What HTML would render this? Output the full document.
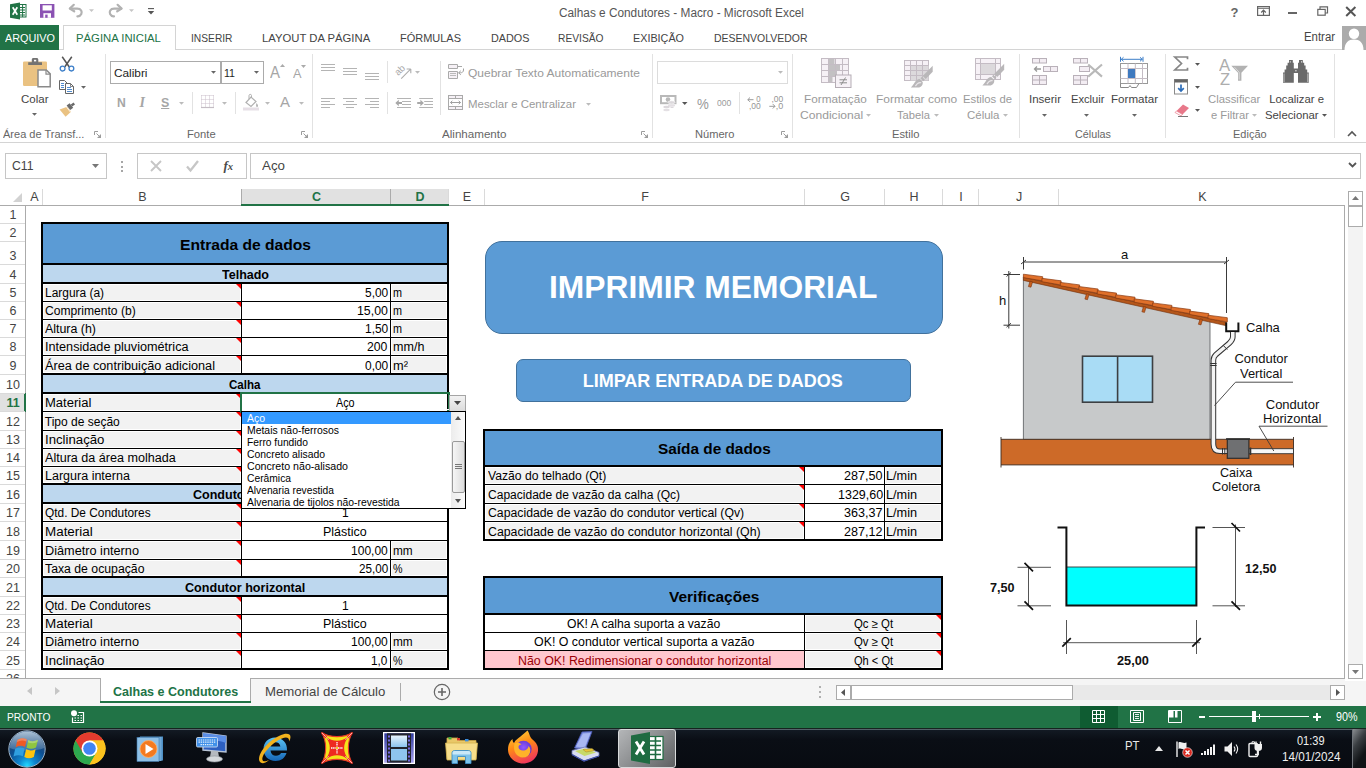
<!DOCTYPE html>
<html lang="pt-BR"><head><meta charset="utf-8"><title>Calhas e Condutores - Macro - Microsoft Excel</title>
<style>
html,body{margin:0;padding:0}
body{width:1366px;height:768px;overflow:hidden;position:relative;background:#fff;font-family:"Liberation Sans",sans-serif;font-size:12px;color:#444}
.a{position:absolute;box-sizing:border-box}
.t{position:absolute;white-space:pre;display:block;transform-origin:0 50%}
svg{display:block;overflow:visible}
</style></head><body>
<!-- title bar -->
<svg class="a" style="left:10px;top:2px" width="17" height="18" viewBox="0 0 17 18">
<rect x="8" y="2.5" width="8" height="12.5" fill="#fff" stroke="#217346" stroke-width="1"/>
<path d="M10 5.5h5M10 8h5M10 10.5h5M10 13h5M12.6 3v12" stroke="#217346" stroke-width="1" fill="none"/>
<path d="M0 2.2 L10 0.5 V17.5 L0 15.8Z" fill="#217346"/>
<path d="M2.7 5.3 L7.3 12.7 M7.3 5.3 L2.7 12.7" stroke="#fff" stroke-width="1.7" fill="none"/>
</svg>
<svg class="a" style="left:40px;top:4px" width="15" height="14" viewBox="0 0 15 14">
<path d="M0 0H14.4V13.8H0Z" fill="#8b52b3"/>
<rect x="2.6" y="1.3" width="9.2" height="5.2" fill="#fff"/>
<rect x="3.4" y="9.2" width="7.6" height="4.6" fill="#fff"/>
<rect x="5.2" y="10.6" width="2.4" height="3.2" fill="#8b52b3"/>
</svg>
<svg class="a" style="left:68px;top:3px" width="70" height="16" viewBox="0 0 70 16">
<g fill="none" stroke="#b2b2b2" stroke-width="2.2" stroke-linecap="round" stroke-linejoin="round">
<path d="M5.8 1.8 L1.8 5.6 L6.2 8.3"/><path d="M2.2 5.6 H9.2 C13.3 5.6 14.3 9 13.3 11 C12.4 12.8 10.5 13.4 9.4 13.3"/>
<path d="M49.6 1.8 L53.6 5.6 L49.2 8.3"/><path d="M53.2 5.6 H46.2 C42.1 5.6 41.1 9 42.1 11 C43 12.8 44.9 13.4 46 13.3"/>
</g>
<path d="M21 6.2h5l-2.5 2.8z M61 6.2h5l-2.5 2.8z" fill="#c6c6c6"/>
</svg>
<svg class="a" style="left:147px;top:7px" width="8" height="9" viewBox="0 0 8 9"><path d="M1 1.6h6" stroke="#555" stroke-width="1.1"/><path d="M0.8 4h6.4L4 7.4z" fill="#555"/></svg>
<span class="t" style="left:559.00px;top:5px;line-height:16px;font-size:12px;color:#555;transform:scaleX(0.9849);">Calhas e Condutores - Macro - Microsoft Excel</span>
<span class="t" style="left:1230.53px;top:3.5px;line-height:18px;font-size:13px;color:#666;font-weight:bold;">?</span>
<svg class="a" style="left:1257px;top:6px" width="14" height="11" viewBox="0 0 14 11"><rect x="0.600" y="0.600" width="11.800" height="8.800" fill="none" stroke="#666" stroke-width="1.200"/><path d="M0.600 2.300h11.800" stroke="#666"/><path d="M6.500 9V4.400M4.200 6.500L6.500 4.200L8.800 6.500" stroke="#666" stroke-width="1.200" fill="none"/></svg>
<div class="a" style="left:1288px;top:12px;width:9px;height:2px;background:#666"></div>
<svg class="a" style="left:1316.500px;top:6px" width="12" height="12" viewBox="0 0 12 12"><path d="M3 3V0.8H10.5V7H8.2" fill="none" stroke="#666" stroke-width="1.2"/><rect x="0.8" y="3.4" width="7.4" height="5.8" fill="none" stroke="#666" stroke-width="1.2"/></svg>
<svg class="a" style="left:1345px;top:6px" width="12" height="11" viewBox="0 0 12 11"><path d="M1.2 1L10.4 10M10.4 1L1.2 10" stroke="#555" stroke-width="2"/></svg>
<!-- tabs -->
<div class="a" style="left:0px;top:49px;width:1366px;height:1px;background:#d4d4d4"></div>
<div class="a" style="left:0px;top:25px;width:59px;height:25px;background:#217346"></div>
<span class="t" style="left:4.50px;top:29.7px;line-height:16px;font-size:11.5px;color:#fff;transform:scaleX(0.9428);">ARQUIVO</span>
<div class="a" style="left:63px;top:25px;width:113px;height:25px;background:#fff;border:1px solid #d4d4d4;border-bottom:none"></div>
<span class="t" style="left:76.00px;top:29.7px;line-height:16px;font-size:11.5px;color:#217346;transform:scaleX(0.9837);">PÁGINA INICIAL</span>
<span class="t" style="left:190.50px;top:29.7px;line-height:16px;font-size:11.5px;color:#444;transform:scaleX(0.8897);">INSERIR</span>
<span class="t" style="left:261.50px;top:29.7px;line-height:16px;font-size:11.5px;color:#444;transform:scaleX(0.9822);">LAYOUT DA PÁGINA</span>
<span class="t" style="left:400.00px;top:29.7px;line-height:16px;font-size:11.5px;color:#444;transform:scaleX(0.9547);">FÓRMULAS</span>
<span class="t" style="left:490.50px;top:29.7px;line-height:16px;font-size:11.5px;color:#444;transform:scaleX(0.9414);">DADOS</span>
<span class="t" style="left:558.00px;top:29.7px;line-height:16px;font-size:11.5px;color:#444;transform:scaleX(0.8899);">REVISÃO</span>
<span class="t" style="left:633.00px;top:29.7px;line-height:16px;font-size:11.5px;color:#444;transform:scaleX(0.9388);">EXIBIÇÃO</span>
<span class="t" style="left:713.50px;top:29.7px;line-height:16px;font-size:11.5px;color:#444;transform:scaleX(0.9106);">DESENVOLVEDOR</span>
<span class="t" style="left:1304.00px;top:29px;line-height:16px;font-size:12px;color:#444;transform:scaleX(0.9487);">Entrar</span>
<svg class="a" style="left:1342px;top:26px" width="25" height="24" viewBox="0 0 25 24"><rect width="25" height="24" fill="#ababab"/><circle cx="12" cy="7.800" r="5.200" fill="#fff"/><path d="M2.500 24c0-7.500 4-10.500 9.500-10.500s9.500 3 9.500 10.500z" fill="#fff"/></svg>
<!-- ribbon -->
<div class="a" style="left:0px;top:142px;width:1366px;height:1px;background:#d4d4d4"></div>
<div class="a" style="left:105px;top:54px;width:1px;height:84px;background:#e2e2e2"></div>
<div class="a" style="left:312px;top:54px;width:1px;height:84px;background:#e2e2e2"></div>
<div class="a" style="left:652px;top:54px;width:1px;height:84px;background:#e2e2e2"></div>
<div class="a" style="left:792px;top:54px;width:1px;height:84px;background:#e2e2e2"></div>
<div class="a" style="left:1019px;top:54px;width:1px;height:84px;background:#e2e2e2"></div>
<div class="a" style="left:1165px;top:54px;width:1px;height:84px;background:#e2e2e2"></div>
<div class="a" style="left:1334px;top:54px;width:1px;height:84px;background:#e2e2e2"></div>
<div class="a" style="left:192px;top:92px;width:1px;height:22px;background:#e2e2e2"></div>
<div class="a" style="left:235px;top:92px;width:1px;height:22px;background:#e2e2e2"></div>
<div class="a" style="left:387px;top:61px;width:1px;height:22px;background:#e2e2e2"></div>
<div class="a" style="left:387px;top:92px;width:1px;height:22px;background:#e2e2e2"></div>
<div class="a" style="left:440px;top:61px;width:1px;height:54px;background:#e2e2e2"></div>
<div class="a" style="left:739px;top:92px;width:1px;height:22px;background:#e2e2e2"></div>
<span class="t" style="left:3.00px;top:126.3px;line-height:16px;font-size:11.3px;color:#666;transform:scaleX(0.9747);">Área de Transf...</span>
<span class="t" style="left:186.70px;top:126.3px;line-height:16px;font-size:11.3px;color:#666;transform:scaleX(0.9900);">Fonte</span>
<span class="t" style="left:441.50px;top:126.3px;line-height:16px;font-size:11.3px;color:#666;transform:scaleX(1.0271);">Alinhamento</span>
<span class="t" style="left:694.60px;top:126.3px;line-height:16px;font-size:11.3px;color:#666;transform:scaleX(0.9806);">Número</span>
<span class="t" style="left:892.00px;top:126.3px;line-height:16px;font-size:11.3px;color:#666;transform:scaleX(0.9919);">Estilo</span>
<span class="t" style="left:1074.50px;top:126.3px;line-height:16px;font-size:11.3px;color:#666;transform:scaleX(0.9529);">Células</span>
<span class="t" style="left:1233.00px;top:126.3px;line-height:16px;font-size:11.3px;color:#666;transform:scaleX(0.9727);">Edição</span>
<svg class="a" style="left:94px;top:131px" width="7" height="7" viewBox="0 0 7 7"><path d="M0.500 4V0.500H4" fill="none" stroke="#9c9c9c"/><path d="M2.500 2.500L6 6" fill="none" stroke="#9c9c9c"/><path d="M7 3V7H3Z" fill="#9c9c9c"/></svg>
<svg class="a" style="left:301px;top:131px" width="7" height="7" viewBox="0 0 7 7"><path d="M0.500 4V0.500H4" fill="none" stroke="#9c9c9c"/><path d="M2.500 2.500L6 6" fill="none" stroke="#9c9c9c"/><path d="M7 3V7H3Z" fill="#9c9c9c"/></svg>
<svg class="a" style="left:641px;top:131px" width="7" height="7" viewBox="0 0 7 7"><path d="M0.500 4V0.500H4" fill="none" stroke="#9c9c9c"/><path d="M2.500 2.500L6 6" fill="none" stroke="#9c9c9c"/><path d="M7 3V7H3Z" fill="#9c9c9c"/></svg>
<svg class="a" style="left:781px;top:131px" width="7" height="7" viewBox="0 0 7 7"><path d="M0.500 4V0.500H4" fill="none" stroke="#9c9c9c"/><path d="M2.500 2.500L6 6" fill="none" stroke="#9c9c9c"/><path d="M7 3V7H3Z" fill="#9c9c9c"/></svg>
<svg class="a" style="left:1347px;top:131px" width="10" height="6" viewBox="0 0 10 6"><path d="M1 5L5 1L9 5" fill="none" stroke="#555" stroke-width="1.6"/></svg>
<svg class="a" style="left:23px;top:58px" width="29" height="30" viewBox="0 0 29 30">
<rect x="0" y="3.400" width="24" height="24.500" rx="1.200" fill="#eac282"/>
<path d="M5.200 4.200H8.800V1.600C8.800 .6 9.500 0 10.500 0H13.600C14.600 0 15.300 .6 15.300 1.600V4.200H19V7H5.200Z" fill="#737373"/><rect x="11" y="1.800" width="2.200" height="1.600" fill="#fff"/>
<path d="M15 12H23.300L27.200 15.900V28.700H15Z" fill="#fff" stroke="#8a8a8a" stroke-width="1.500"/><path d="M23 12V16.200H27.200" fill="none" stroke="#8a8a8a" stroke-width="1.200"/>
</svg>
<span class="t" style="left:21.00px;top:91px;line-height:16px;font-size:11.3px;color:#444;transform:scaleX(1.0187);">Colar</span>
<svg class="a" style="left:32px;top:113.125px" width="5" height="2.75" viewBox="0 0 5 2.75"><path d="M0 0H5L2.5 2.75Z" fill="#666"/></svg>
<svg class="a" style="left:59px;top:56px" width="16" height="16" viewBox="0 0 16 16">
<path d="M3.2 0.8L10.3 11M12.8 0.8L5.7 11" stroke="#555" stroke-width="1.5" fill="none"/>
<circle cx="3.6" cy="12.6" r="2.4" fill="none" stroke="#3d7fc9" stroke-width="1.3"/><circle cx="12.4" cy="12.6" r="2.4" fill="none" stroke="#3d7fc9" stroke-width="1.3"/></svg>
<svg class="a" style="left:59px;top:80px" width="16" height="14" viewBox="0 0 16 14">
<path d="M0.500 0.500H5.500L8.500 3.500V9.500H0.500Z" fill="#fff" stroke="#666"/><path d="M2 3.500h3M2 5.500h3M2 7.500h3" stroke="#3d7fc9" stroke-width=".9"/>
<path d="M6.500 3.500H11.500L14.500 6.500V13.500H6.500Z" fill="#fff" stroke="#666"/><path d="M11.500 3.500V6.500H14.500" fill="none" stroke="#666" stroke-width=".8"/><path d="M8 7.500h4M8 9.500h5M8 11.500h5" stroke="#3d7fc9" stroke-width=".9"/></svg>
<svg class="a" style="left:81px;top:85.625px" width="5" height="2.75" viewBox="0 0 5 2.75"><path d="M0 0H5L2.5 2.75Z" fill="#666"/></svg>
<svg class="a" style="left:59px;top:102px" width="17" height="16" viewBox="0 0 17 16">
<path d="M0.600 7.600L8.200 4.800L12 9.700L6.600 14.800Z" fill="#eac282"/>
<path d="M7.600 3.400L10.600 1.200L14.200 5.800L11.200 8Z" fill="#6a6a6a"/><path d="M11.800 2.600L14.600 0.600L16 2.400L13.200 4.400Z" fill="#6a6a6a"/><path d="M7 4.400L11.400 10" stroke="#fff" stroke-width=".8"/>
</svg>
<div class="a" style="left:110px;top:61px;width:111px;height:23px;border:1px solid #ababab;background:#fff"></div>
<div class="a" style="left:221px;top:61px;width:43px;height:23px;border:1px solid #ababab;background:#fff"></div>
<span class="t" style="left:113.50px;top:64.5px;line-height:16px;font-size:11.3px;color:#1e1e1e;transform:scaleX(1.0464);">Calibri</span>
<span class="t" style="left:223.50px;top:64.5px;line-height:16px;font-size:11.3px;color:#1e1e1e;transform:scaleX(0.9380);">11</span>
<svg class="a" style="left:210.7px;top:71.125px" width="5" height="2.75" viewBox="0 0 5 2.75"><path d="M0 0H5L2.5 2.75Z" fill="#666"/></svg>
<svg class="a" style="left:253.7px;top:71.125px" width="5" height="2.75" viewBox="0 0 5 2.75"><path d="M0 0H5L2.5 2.75Z" fill="#666"/></svg>
<span class="t" style="left:270.00px;top:62px;line-height:22px;font-size:16px;color:#a6a6a6;transform:scaleX(0.9370);">A</span>
<span class="t" style="left:293.00px;top:65px;line-height:18px;font-size:13px;color:#a6a6a6;transform:scaleX(0.9803);">A</span>
<svg class="a" style="left:280px;top:64px" width="5" height="3" viewBox="0 0 5 3"><path d="M0 3L2.500 0L5 3Z" fill="#aaa"/></svg>
<svg class="a" style="left:301px;top:65px" width="5" height="3" viewBox="0 0 5 3"><path d="M0 0H5L2.500 3Z" fill="#aaa"/></svg>
<span class="t" style="left:116.50px;top:93.5px;line-height:18px;font-size:13px;color:#a6a6a6;font-weight:bold;transform:scaleX(0.9373);">N</span>
<span class="t" style="left:139.50px;top:92.5px;line-height:20px;font-size:14px;color:#a6a6a6;font-weight:bold;font-style:italic;font-family:'Liberation Serif',serif;">I</span>
<span class="t" style="left:161.20px;top:93.5px;line-height:18px;font-size:13px;color:#a6a6a6;font-weight:bold;text-decoration:underline;transform:scaleX(0.9572);">S</span>
<svg class="a" style="left:178.5px;top:101.625px" width="5" height="2.75" viewBox="0 0 5 2.75"><path d="M0 0H5L2.5 2.75Z" fill="#bbb"/></svg>
<svg class="a" style="left:201px;top:95px" width="14" height="14" viewBox="0 0 14 14"><path d="M0.500 0.500V12M4.500 0.500V12M8.500 0.500V12M12.500 0.500V12M0.500 0.500H13M0.500 4.500H13M0.500 8.500H13" stroke="#cbbfcb" stroke-dasharray="1 1" fill="none"/><path d="M0 12.500H13" stroke="#c4bcc4" stroke-width="1.200"/></svg>
<svg class="a" style="left:221.5px;top:101.625px" width="5" height="2.75" viewBox="0 0 5 2.75"><path d="M0 0H5L2.5 2.75Z" fill="#bbb"/></svg>
<svg class="a" style="left:243px;top:94px" width="17" height="17" viewBox="0 0 17 17"><path d="M3 8.500L8 3L13 7.500L8 12.500Z" fill="#fff" stroke="#b0b0b0" stroke-width="1.2"/><path d="M6 5V1.500C6 0 8.500 0 8.500 1.500V3.500" fill="none" stroke="#b0b0b0"/><path d="M13.500 9C15 11 15.500 12 14.500 12.800S12.500 12 13.500 9Z" fill="#b0b0b0"/><rect x="0" y="13.500" width="16" height="3" fill="#e6dfe6"/></svg>
<svg class="a" style="left:265px;top:101.625px" width="5" height="2.75" viewBox="0 0 5 2.75"><path d="M0 0H5L2.5 2.75Z" fill="#bbb"/></svg>
<span class="t" style="left:280.00px;top:91px;line-height:22px;font-size:15px;color:#a6a6a6;">A</span>
<svg class="a" style="left:298.5px;top:101.625px" width="5" height="2.75" viewBox="0 0 5 2.75"><path d="M0 0H5L2.5 2.75Z" fill="#bbb"/></svg>
<div class="a" style="left:321px;top:64px;width:14px;height:1px;background:#b4b4b4"></div><div class="a" style="left:321px;top:67px;width:14px;height:1px;background:#b4b4b4"></div><div class="a" style="left:321px;top:70px;width:14px;height:1px;background:#b4b4b4"></div>
<div class="a" style="left:343px;top:68px;width:14px;height:1px;background:#b4b4b4"></div><div class="a" style="left:343px;top:71px;width:14px;height:1px;background:#b4b4b4"></div><div class="a" style="left:343px;top:74px;width:14px;height:1px;background:#b4b4b4"></div>
<div class="a" style="left:365px;top:73px;width:14px;height:1px;background:#b4b4b4"></div><div class="a" style="left:365px;top:76px;width:14px;height:1px;background:#b4b4b4"></div><div class="a" style="left:365px;top:79px;width:14px;height:1px;background:#b4b4b4"></div>
<div class="a" style="left:321px;top:98px;width:14px;height:1px;background:#b4b4b4"></div><div class="a" style="left:321px;top:101px;width:9px;height:1px;background:#b4b4b4"></div><div class="a" style="left:321px;top:104px;width:14px;height:1px;background:#b4b4b4"></div><div class="a" style="left:321px;top:107px;width:9px;height:1px;background:#b4b4b4"></div>
<div class="a" style="left:343px;top:98px;width:14px;height:1px;background:#b4b4b4"></div><div class="a" style="left:346px;top:101px;width:8px;height:1px;background:#b4b4b4"></div><div class="a" style="left:343px;top:104px;width:14px;height:1px;background:#b4b4b4"></div><div class="a" style="left:346px;top:107px;width:8px;height:1px;background:#b4b4b4"></div>
<div class="a" style="left:365px;top:98px;width:14px;height:1px;background:#b4b4b4"></div><div class="a" style="left:370px;top:101px;width:9px;height:1px;background:#b4b4b4"></div><div class="a" style="left:365px;top:104px;width:14px;height:1px;background:#b4b4b4"></div><div class="a" style="left:370px;top:107px;width:9px;height:1px;background:#b4b4b4"></div>
<svg class="a" style="left:395px;top:63px" width="17" height="17" viewBox="0 0 17 17"><path d="M6.200 15.600L15.600 6.200M15.800 6H11.600M15.800 6V10.200" fill="none" stroke="#adadad" stroke-width="1.100"/><text x="5.300" y="7.600" font-size="9.500" fill="#a8a8a8" text-anchor="middle" transform="rotate(-45 5.300 7.600)" font-family="Liberation Sans, sans-serif" dy="2.500">ab</text></svg>
<svg class="a" style="left:415px;top:71.125px" width="5" height="2.75" viewBox="0 0 5 2.75"><path d="M0 0H5L2.5 2.75Z" fill="#bbb"/></svg>
<svg class="a" style="left:395px;top:98px" width="17" height="10" viewBox="0 0 17 10"><path d="M2 0.500H16M7 3.500H16M7 6.500H16M2 9.500H16" stroke="#b4b4b4" fill="none"/><path d="M0.300 5L3.800 1.800V4.100H7V5.900H3.800V8.200Z" fill="#a8a8a8"/></svg>
<svg class="a" style="left:417px;top:98px" width="17" height="10" viewBox="0 0 17 10"><path d="M2.200 0.500H16M7.200 3.500H16M7.200 6.500H16M2.200 9.500H16" stroke="#b4b4b4" fill="none"/><path d="M6.900 5L3.400 1.800V4.100H0.200V5.900H3.400V8.200Z" fill="#a8a8a8"/></svg>
<svg class="a" style="left:448px;top:64px" width="17" height="15" viewBox="0 0 17 15"><path d="M0.500 0.500H9.500V4.500H0.500Z" fill="#f6f1f6" stroke="#aaa"/><path d="M9.500 2.500H14" stroke="#aaa"/><path d="M0.500 7.500H9.500V14.500H0.500Z" fill="#f6f1f6" stroke="#aaa"/><path d="M2 9.500H8M2 11.500H8" stroke="#bbb"/><path d="M15.500 4.500V6C15.500 8 14 8.800 12.500 8.800H10.800M12.800 6.800L10.600 8.800L12.800 10.800" fill="none" stroke="#a0a0a0" stroke-width="1"/></svg>
<span class="t" style="left:468.00px;top:64.7px;line-height:16px;font-size:11.3px;color:#9a9a9a;transform:scaleX(1.0625);">Quebrar Texto Automaticamente</span>
<svg class="a" style="left:448px;top:95px" width="15" height="15" viewBox="0 0 15 15"><rect x="0.500" y="0.500" width="14" height="14" fill="#f6f1f6" stroke="#aaa"/><rect x="1" y="4" width="13" height="7" fill="#fff"/><path d="M0.500 3.500H14.500M0.500 11.500H14.500M7.500 0.500V3.500M7.500 11.500V14.500" stroke="#aaa"/><path d="M2.500 7.500H12.500M4.300 5.800L2.500 7.500L4.300 9.200M10.700 5.800L12.500 7.500L10.700 9.200" fill="none" stroke="#a0a0a0"/></svg>
<span class="t" style="left:468.00px;top:95.5px;line-height:16px;font-size:11.3px;color:#9a9a9a;transform:scaleX(1.0119);">Mesclar e Centralizar</span>
<svg class="a" style="left:586.1px;top:102.625px" width="5" height="2.75" viewBox="0 0 5 2.75"><path d="M0 0H5L2.5 2.75Z" fill="#bbb"/></svg>
<div class="a" style="left:657px;top:61px;width:131px;height:23px;border:1px solid #dcdcdc;background:#fff"></div>
<svg class="a" style="left:778px;top:71.125px" width="5" height="2.75" viewBox="0 0 5 2.75"><path d="M0 0H5L2.5 2.75Z" fill="#bbb"/></svg>
<svg class="a" style="left:660px;top:95px" width="17" height="17" viewBox="0 0 17 17"><rect x="1" y="1" width="14.500" height="7.200" fill="#fff" stroke="#b9b9b9" stroke-width="2"/><circle cx="8" cy="4.600" r="2.300" fill="#b9b9b9"/><ellipse cx="11.500" cy="7.300" rx="3.600" ry="1.500" fill="#dcd8dc" stroke="#fff" stroke-width=".5"/><ellipse cx="11.500" cy="10.500" rx="3.600" ry="1.300" fill="#e4e0e4"/><ellipse cx="6.500" cy="12" rx="3.200" ry="1.200" fill="#dcd8dc"/><ellipse cx="6.500" cy="15" rx="3.200" ry="1.200" fill="#e4e0e4"/><path d="M10.500 12.500H13.500" stroke="#dcd8dc"/></svg>
<svg class="a" style="left:681.65px;top:101.987px" width="5.5" height="3.025" viewBox="0 0 5.5 3.025"><path d="M0 0H5.5L2.75 3.025Z" fill="#555"/></svg>
<span class="t" style="left:696.50px;top:93.5px;line-height:20px;font-size:14.5px;color:#9a9a9a;transform:scaleX(0.9152);">%</span>
<span class="t" style="left:716.70px;top:95.8px;line-height:14px;font-size:9.5px;color:#9a9a9a;transform:scaleX(0.9022);">000</span>
<svg class="a" style="left:746px;top:95px" width="40" height="16" viewBox="0 0 40 16" font-family="Liberation Sans, sans-serif" font-size="9" fill="#959595">
<path d="M7.500 4.700H1.800M4 2.500L1.800 4.700L4 6.900" fill="none" stroke="#9a9a9a" stroke-width="1"/>
<text x="10.300" y="6.600" textLength="4.300" lengthAdjust="spacingAndGlyphs">0</text><text x="3" y="14" textLength="11.800" lengthAdjust="spacingAndGlyphs">,00</text>
<text x="25.500" y="6.600" textLength="11.800" lengthAdjust="spacingAndGlyphs">,00</text><text x="29.800" y="14" textLength="7.500" lengthAdjust="spacingAndGlyphs">,0</text>
<path d="M23.300 11.300H29M26.800 9.100L29 11.300L26.800 13.500" fill="none" stroke="#9a9a9a" stroke-width="1"/></svg>
<svg class="a" style="left:821px;top:58px" width="31" height="30" viewBox="0 0 31 30"><rect x="0.500" y="0.500" width="27" height="24" fill="#f6f1f6" stroke="#c4bcc4"/><path d="M8 1H13.500V7H19V12.500H16V18.500H11.500V24H8Z" fill="#c3c1c3"/><path d="M0.500 6.500H27.500M0.500 12.500H27.500M0.500 18.500H27.500M7.500 0.500V24.500M14.500 0.500V24.500M21.500 0.500V24.500" stroke="#c4bcc4" fill="none"/><rect x="14.500" y="17" width="15.500" height="12.500" fill="#f6f1f6" stroke="#b5adb5"/><path d="M18.500 21.800H26M18.500 24.800H26M24.500 19.500L20 27" stroke="#8c8c8c" stroke-width="1" fill="none"/></svg>
<span class="t" style="left:804.00px;top:91px;line-height:16px;font-size:11.3px;color:#9a9a9a;transform:scaleX(1.0403);">Formatação</span>
<span class="t" style="left:799.50px;top:106.5px;line-height:16px;font-size:11.3px;color:#9a9a9a;transform:scaleX(1.0706);">Condicional</span>
<svg class="a" style="left:865.5px;top:113.625px" width="5" height="2.75" viewBox="0 0 5 2.75"><path d="M0 0H5L2.5 2.75Z" fill="#bbb"/></svg>
<svg class="a" style="left:904px;top:58px" width="30" height="30" viewBox="0 0 30 30"><rect x="0.500" y="2.500" width="24" height="20" fill="#f6f1f6" stroke="#c4bcc4"/><rect x="6.500" y="7.500" width="18" height="15" fill="#dcd9dc"/><path d="M0.500 7.500H24.500M0.500 12.500H24.500M0.500 17.500H24.500M6.500 2.500V22.500M12.500 2.500V22.500M18.500 2.500V22.500" stroke="#c4bcc4" fill="none"/><g transform="translate(28.7 7.8)" fill="#b9b7b9"><path d="M0 0V6L-7 13.200L-10 10.200Z"/><path d="M-10.700 11L-7.800 13.900L-9.300 15.400L-12.200 12.500Z"/><path d="M-13 13.200L-10 16.200C-9.500 19 -11.500 21.700 -14.500 21.700H-21.800C-18.500 19 -17.500 13.500 -13 13.200Z"/><path d="M-17.300 20.300C-15.500 17.300 -13.500 16.300 -11.500 17" stroke="#e9e6e9" stroke-width="1.100" fill="none"/></g></svg>
<span class="t" style="left:876.40px;top:91px;line-height:16px;font-size:11.3px;color:#9a9a9a;transform:scaleX(1.0603);">Formatar como</span>
<span class="t" style="left:897.00px;top:106.5px;line-height:16px;font-size:11.3px;color:#9a9a9a;transform:scaleX(0.9913);">Tabela</span>
<svg class="a" style="left:934px;top:113.625px" width="5" height="2.75" viewBox="0 0 5 2.75"><path d="M0 0H5L2.5 2.75Z" fill="#bbb"/></svg>
<svg class="a" style="left:975px;top:58px" width="30" height="30" viewBox="0 0 30 30"><rect x="0.500" y="0.500" width="25" height="21" fill="#f6f1f6" stroke="#c4bcc4"/><rect x="5.500" y="5.500" width="15" height="11" fill="#dcd9dc"/><path d="M0.500 5.500H25.500M0.500 16.500H25.500M5.500 0.500V21.500M20.500 0.500V21.500" stroke="#c4bcc4" fill="none"/><g transform="translate(29.2 5.8)" fill="#b9b7b9"><path d="M0 0V6L-7 13.200L-10 10.200Z"/><path d="M-10.700 11L-7.800 13.900L-9.300 15.400L-12.200 12.500Z"/><path d="M-13 13.200L-10 16.200C-9.500 19 -11.500 21.700 -14.500 21.700H-21.800C-18.500 19 -17.500 13.500 -13 13.200Z"/><path d="M-17.300 20.300C-15.500 17.300 -13.500 16.300 -11.500 17" stroke="#e9e6e9" stroke-width="1.100" fill="none"/></g></svg>
<span class="t" style="left:963.00px;top:91px;line-height:16px;font-size:11.3px;color:#9a9a9a;">Estilos de</span>
<span class="t" style="left:967.00px;top:106.5px;line-height:16px;font-size:11.3px;color:#9a9a9a;transform:scaleX(1.0148);">Célula</span>
<svg class="a" style="left:1003px;top:113.625px" width="5" height="2.75" viewBox="0 0 5 2.75"><path d="M0 0H5L2.5 2.75Z" fill="#bbb"/></svg>
<svg class="a" style="left:1032px;top:58px" width="27" height="28" viewBox="0 0 27 28"><g fill="#f3edf3" stroke="#b9b1b9"><rect x="0.500" y="0.500" width="14" height="4.500"/><path d="M7.500 0.500V5"/><rect x="11.500" y="8.500" width="14" height="5"/><path d="M18.500 8.500V13.500"/><rect x="0.500" y="17.500" width="14" height="9"/><path d="M0.500 22H14.500M7.500 17.500V26.500"/></g><path d="M9 11H2.500M5 8.500L2.500 11L5 13.500" fill="none" stroke="#999" stroke-width="1.300"/></svg>
<span class="t" style="left:1029.00px;top:91px;line-height:16px;font-size:11.3px;color:#444;transform:scaleX(1.0196);">Inserir</span>
<svg class="a" style="left:1041.5px;top:113.625px" width="5" height="2.75" viewBox="0 0 5 2.75"><path d="M0 0H5L2.5 2.75Z" fill="#666"/></svg>
<svg class="a" style="left:1073px;top:58px" width="30" height="28" viewBox="0 0 30 28"><g fill="#f3edf3" stroke="#b9b1b9"><rect x="0.500" y="0.500" width="14" height="4.500"/><path d="M7.500 0.500V5"/><rect x="6.500" y="8.500" width="10" height="5"/><rect x="0.500" y="17.500" width="14" height="9"/><path d="M0.500 22H14.500M7.500 17.500V26.500"/></g><path d="M15.200 6.500L29 18.600M29 6.500L15.200 18.600" fill="none" stroke="#b9b9b9" stroke-width="2.100"/></svg>
<span class="t" style="left:1070.50px;top:91px;line-height:16px;font-size:11.3px;color:#444;transform:scaleX(0.9883);">Excluir</span>
<svg class="a" style="left:1083.8px;top:113.625px" width="5" height="2.75" viewBox="0 0 5 2.75"><path d="M0 0H5L2.5 2.75Z" fill="#666"/></svg>
<svg class="a" style="left:1120px;top:55px" width="29" height="33" viewBox="0 0 29 33"><path d="M1 4.300H22.500M0.500 1.800V6.800M23 1.800V6.800M3.500 2.300L1.300 4.300L3.500 6.300M20 2.300L22.200 4.300L20 6.300" fill="none" stroke="#3d7fc9" stroke-width="1"/><rect x="0.500" y="8.500" width="27" height="20" fill="#fff" stroke="#999"/><path d="M0.500 13.500H27.500M0.500 23.500H27.500M8 8.500V28.500M15.300 8.500V28.500M22.500 8.500V28.500" stroke="#c4bcc4"/><rect x="8" y="14" width="7" height="9" fill="#3f7abf"/><path d="M0.500 28.500V32.500H8.500L10 30.500L11.500 32.500H16.500L19 28.500" fill="none" stroke="#888"/></svg>
<span class="t" style="left:1110.70px;top:91px;line-height:16px;font-size:11.3px;color:#444;transform:scaleX(1.0257);">Formatar</span>
<svg class="a" style="left:1132px;top:113.625px" width="5" height="2.75" viewBox="0 0 5 2.75"><path d="M0 0H5L2.5 2.75Z" fill="#666"/></svg>
<svg class="a" style="left:1173px;top:56px" width="16" height="15" viewBox="0 0 16 15"><path d="M14.500 3.200V1H1.800L8.500 7.500L1.800 14H14.500V11.800" fill="none" stroke="#868686" stroke-width="1.700"/></svg>
<svg class="a" style="left:1195px;top:63.125px" width="5" height="2.75" viewBox="0 0 5 2.75"><path d="M0 0H5L2.5 2.75Z" fill="#555"/></svg>
<svg class="a" style="left:1174px;top:79px" width="14" height="16" viewBox="0 0 14 16"><rect x="0.500" y="0.500" width="13" height="14.500" fill="#fff" stroke="#8a8a8a"/><rect x="0.500" y="0.500" width="13" height="3" fill="#666"/><path d="M7 5.500V12M4.200 9.200L7 12L9.800 9.200" fill="none" stroke="#2b6cb8" stroke-width="1.700"/></svg>
<svg class="a" style="left:1195px;top:85.625px" width="5" height="2.75" viewBox="0 0 5 2.75"><path d="M0 0H5L2.5 2.75Z" fill="#555"/></svg>
<svg class="a" style="left:1174px;top:104px" width="16" height="13" viewBox="0 0 16 13"><path d="M9 0.500L15 4L8.500 10.500L2.500 7Z" fill="#e8788a"/><path d="M2.500 7L8.500 10.500L7 11.800L1 8.500Z" fill="#fff" stroke="#e8788a" stroke-width=".7"/><path d="M4 12.500H14" stroke="#777"/></svg>
<svg class="a" style="left:1195px;top:108.625px" width="5" height="2.75" viewBox="0 0 5 2.75"><path d="M0 0H5L2.5 2.75Z" fill="#555"/></svg>
<span class="t" style="left:1219.30px;top:54.5px;line-height:22px;font-size:16px;color:#adadad;transform:scaleX(1.0495);">A</span>
<span class="t" style="left:1219.80px;top:69px;line-height:22px;font-size:16px;color:#adadad;transform:scaleX(1.0232);">Z</span>
<svg class="a" style="left:1231px;top:65px" width="18" height="16" viewBox="0 0 18 16"><path d="M0.300 0.800H17L10.400 7.800V15.700H7V7.800Z" fill="#b2b2b2"/><path d="M3.500 2.200L8.200 7.300V14.500" fill="none" stroke="#e4e4e4" stroke-width=".8"/></svg>
<span class="t" style="left:1207.70px;top:91px;line-height:16px;font-size:11.3px;color:#9a9a9a;transform:scaleX(1.0039);">Classificar</span>
<span class="t" style="left:1211.00px;top:106.5px;line-height:16px;font-size:11.3px;color:#9a9a9a;transform:scaleX(0.9925);">e Filtrar</span>
<svg class="a" style="left:1251.5px;top:113.625px" width="5" height="2.75" viewBox="0 0 5 2.75"><path d="M0 0H5L2.5 2.75Z" fill="#bbb"/></svg>
<svg class="a" style="left:1283px;top:60px" width="26" height="23" viewBox="0 0 26 23"><path d="M6 0H9.800V2.700H10.800V22.700H0V12.500H1.600V9.500H3.200V5.500H4.600V2.700H6Z M19.800 0H16V2.700H15V22.700H25.800V12.500H24.200V9.500H22.600V5.500H21.200V2.700H19.800Z M10.800 8.500H15V13H10.800Z" fill="#6a6a6a"/><rect x="12.200" y="10.300" width="1.400" height="1" fill="#fff"/><path d="M1 13.500V22M24.800 13.500V22M7.300 1V2.700M18.500 1V2.700" stroke="#e8e8e8" stroke-width=".7"/></svg>
<span class="t" style="left:1269.30px;top:91px;line-height:16px;font-size:11.3px;color:#444;">Localizar e</span>
<span class="t" style="left:1265.30px;top:106.5px;line-height:16px;font-size:11.3px;color:#444;transform:scaleX(1.0041);">Selecionar</span>
<svg class="a" style="left:1322px;top:113.625px" width="5" height="2.75" viewBox="0 0 5 2.75"><path d="M0 0H5L2.5 2.75Z" fill="#555"/></svg>
<!-- formula bar -->
<div class="a" style="left:5px;top:153px;width:102px;height:26px;border:1px solid #c6c6c6;background:#fff"></div>
<span class="t" style="left:12.30px;top:157.3px;line-height:18px;font-size:13px;color:#444;transform:scaleX(0.9395);">C11</span>
<svg class="a" style="left:92px;top:164px" width="7" height="4" viewBox="0 0 7 4"><path d="M0 0H7L3.500 4Z" fill="#777"/></svg>
<div class="a" style="left:121px;top:161px;width:2px;height:2px;background:#a6a6a6"></div>
<div class="a" style="left:121px;top:165.5px;width:2px;height:2px;background:#a6a6a6"></div>
<div class="a" style="left:121px;top:170px;width:2px;height:2px;background:#a6a6a6"></div>
<div class="a" style="left:137px;top:153px;width:110px;height:26px;border:1px solid #c6c6c6;background:#fff"></div>
<svg class="a" style="left:150px;top:160px" width="12" height="12" viewBox="0 0 12 12"><path d="M1 1L11 11M11 1L1 11" stroke="#c6c6c6" stroke-width="1.900"/></svg>
<svg class="a" style="left:186px;top:160px" width="13" height="12" viewBox="0 0 13 12"><path d="M1 6.500L4.500 10.500L12 1" fill="none" stroke="#c6c6c6" stroke-width="2.300"/></svg>
<span class="t" style="left:223.50px;top:156.5px;line-height:18px;font-size:13px;color:#4a4a4a;font-weight:bold;font-style:italic;font-family:'Liberation Serif',serif;">f</span>
<span class="t" style="left:227.80px;top:160px;line-height:14px;font-size:10.5px;color:#4a4a4a;font-weight:bold;font-style:italic;font-family:'Liberation Serif',serif;">x</span>
<div class="a" style="left:250px;top:153px;width:1111px;height:26px;border:1px solid #c6c6c6;background:#fff"></div>
<span class="t" style="left:262.00px;top:157.3px;line-height:18px;font-size:13px;color:#444;transform:scaleX(1.0267);">Aço</span>
<svg class="a" style="left:1348px;top:162px" width="9" height="6" viewBox="0 0 9 6"><path d="M1 1L4.500 4.500L8 1" fill="none" stroke="#555" stroke-width="1.800"/></svg>
<!-- headers -->
<div class="a" style="left:0px;top:205px;width:1345px;height:1px;background:#ababab"></div>
<div class="a" style="left:25px;top:206px;width:1px;height:473px;background:#ababab"></div>
<div class="a" style="left:1344px;top:205px;width:1px;height:474px;background:#ababab"></div>
<div class="a" style="left:242px;top:189px;width:207px;height:15px;background:#e1e1e1"></div>
<div class="a" style="left:241px;top:204px;width:208px;height:2px;background:#217346"></div>
<svg class="a" style="left:13px;top:193px" width="9" height="9" viewBox="0 0 9 9"><path d="M9 0V9H0Z" fill="#d2d2d2"/></svg>
<span class="t" style="left:30.33px;top:187.7px;line-height:18px;font-size:12.5px;color:#444;">A</span>
<div class="a" style="left:42px;top:189px;width:1px;height:16px;background:#dadada"></div>
<span class="t" style="left:138.33px;top:187.7px;line-height:18px;font-size:12.5px;color:#444;">B</span>
<div class="a" style="left:241px;top:189px;width:1px;height:15px;background:#ababab"></div>
<span class="t" style="left:311.99px;top:187.7px;line-height:18px;font-size:12.5px;color:#217346;font-weight:bold;">C</span>
<div class="a" style="left:390px;top:189px;width:1px;height:15px;background:#ababab"></div>
<span class="t" style="left:415.49px;top:187.7px;line-height:18px;font-size:12.5px;color:#217346;font-weight:bold;">D</span>
<div class="a" style="left:448px;top:189px;width:1px;height:15px;background:#dadada"></div>
<span class="t" style="left:462.83px;top:187.7px;line-height:18px;font-size:12.5px;color:#444;">E</span>
<div class="a" style="left:484px;top:189px;width:1px;height:16px;background:#dadada"></div>
<span class="t" style="left:641.18px;top:187.7px;line-height:18px;font-size:12.5px;color:#444;">F</span>
<div class="a" style="left:804px;top:189px;width:1px;height:16px;background:#dadada"></div>
<span class="t" style="left:840.14px;top:187.7px;line-height:18px;font-size:12.5px;color:#444;">G</span>
<div class="a" style="left:884px;top:189px;width:1px;height:16px;background:#dadada"></div>
<span class="t" style="left:909.49px;top:187.7px;line-height:18px;font-size:12.5px;color:#444;">H</span>
<div class="a" style="left:942px;top:189px;width:1px;height:16px;background:#dadada"></div>
<span class="t" style="left:959.26px;top:187.7px;line-height:18px;font-size:12.5px;color:#444;">I</span>
<div class="a" style="left:978px;top:189px;width:1px;height:16px;background:#dadada"></div>
<span class="t" style="left:1015.88px;top:187.7px;line-height:18px;font-size:12.5px;color:#444;">J</span>
<div class="a" style="left:1058px;top:189px;width:1px;height:16px;background:#dadada"></div>
<span class="t" style="left:1198.33px;top:187.7px;line-height:18px;font-size:12.5px;color:#444;">K</span>
<div class="a" style="left:0px;top:394px;width:24px;height:18px;background:#e1e1e1"></div>
<div class="a" style="left:24px;top:393px;width:2px;height:19px;background:#217346"></div>
<div class="a" style="left:0px;top:223px;width:25px;height:1px;background:#dadada"></div>
<span class="t" style="left:9.52px;top:205.5px;line-height:18px;font-size:12.5px;color:#444;">1</span>
<div class="a" style="left:0px;top:241px;width:25px;height:1px;background:#dadada"></div>
<span class="t" style="left:9.52px;top:223.5px;line-height:18px;font-size:12.5px;color:#444;">2</span>
<div class="a" style="left:0px;top:264px;width:25px;height:1px;background:#dadada"></div>
<span class="t" style="left:9.52px;top:246.5px;line-height:18px;font-size:12.5px;color:#444;">3</span>
<div class="a" style="left:0px;top:283px;width:25px;height:1px;background:#dadada"></div>
<span class="t" style="left:9.52px;top:265.5px;line-height:18px;font-size:12.5px;color:#444;">4</span>
<div class="a" style="left:0px;top:301px;width:25px;height:1px;background:#dadada"></div>
<span class="t" style="left:9.52px;top:283.5px;line-height:18px;font-size:12.5px;color:#444;">5</span>
<div class="a" style="left:0px;top:319px;width:25px;height:1px;background:#dadada"></div>
<span class="t" style="left:9.52px;top:301.5px;line-height:18px;font-size:12.5px;color:#444;">6</span>
<div class="a" style="left:0px;top:337px;width:25px;height:1px;background:#dadada"></div>
<span class="t" style="left:9.52px;top:319.5px;line-height:18px;font-size:12.5px;color:#444;">7</span>
<div class="a" style="left:0px;top:355px;width:25px;height:1px;background:#dadada"></div>
<span class="t" style="left:9.52px;top:337.5px;line-height:18px;font-size:12.5px;color:#444;">8</span>
<div class="a" style="left:0px;top:374px;width:25px;height:1px;background:#dadada"></div>
<span class="t" style="left:9.52px;top:356.5px;line-height:18px;font-size:12.5px;color:#444;">9</span>
<div class="a" style="left:0px;top:393px;width:25px;height:1px;background:#dadada"></div>
<span class="t" style="left:6.05px;top:375.5px;line-height:18px;font-size:12.5px;color:#444;">10</span>
<div class="a" style="left:0px;top:411px;width:25px;height:1px;background:#dadada"></div>
<span class="t" style="left:6.39px;top:393.5px;line-height:18px;font-size:12.5px;color:#217346;font-weight:bold;">11</span>
<div class="a" style="left:0px;top:430px;width:25px;height:1px;background:#dadada"></div>
<span class="t" style="left:6.05px;top:412.5px;line-height:18px;font-size:12.5px;color:#444;">12</span>
<div class="a" style="left:0px;top:448px;width:25px;height:1px;background:#dadada"></div>
<span class="t" style="left:6.05px;top:430.5px;line-height:18px;font-size:12.5px;color:#444;">13</span>
<div class="a" style="left:0px;top:466px;width:25px;height:1px;background:#dadada"></div>
<span class="t" style="left:6.05px;top:448.5px;line-height:18px;font-size:12.5px;color:#444;">14</span>
<div class="a" style="left:0px;top:484px;width:25px;height:1px;background:#dadada"></div>
<span class="t" style="left:6.05px;top:466.5px;line-height:18px;font-size:12.5px;color:#444;">15</span>
<div class="a" style="left:0px;top:503px;width:25px;height:1px;background:#dadada"></div>
<span class="t" style="left:6.05px;top:485.5px;line-height:18px;font-size:12.5px;color:#444;">16</span>
<div class="a" style="left:0px;top:521px;width:25px;height:1px;background:#dadada"></div>
<span class="t" style="left:6.05px;top:503.5px;line-height:18px;font-size:12.5px;color:#444;">17</span>
<div class="a" style="left:0px;top:540px;width:25px;height:1px;background:#dadada"></div>
<span class="t" style="left:6.05px;top:522.5px;line-height:18px;font-size:12.5px;color:#444;">18</span>
<div class="a" style="left:0px;top:559px;width:25px;height:1px;background:#dadada"></div>
<span class="t" style="left:6.05px;top:541.5px;line-height:18px;font-size:12.5px;color:#444;">19</span>
<div class="a" style="left:0px;top:577px;width:25px;height:1px;background:#dadada"></div>
<span class="t" style="left:6.05px;top:559.5px;line-height:18px;font-size:12.5px;color:#444;">20</span>
<div class="a" style="left:0px;top:596px;width:25px;height:1px;background:#dadada"></div>
<span class="t" style="left:6.05px;top:578.5px;line-height:18px;font-size:12.5px;color:#444;">21</span>
<div class="a" style="left:0px;top:614px;width:25px;height:1px;background:#dadada"></div>
<span class="t" style="left:6.05px;top:596.5px;line-height:18px;font-size:12.5px;color:#444;">22</span>
<div class="a" style="left:0px;top:632px;width:25px;height:1px;background:#dadada"></div>
<span class="t" style="left:6.05px;top:614.5px;line-height:18px;font-size:12.5px;color:#444;">23</span>
<div class="a" style="left:0px;top:650px;width:25px;height:1px;background:#dadada"></div>
<span class="t" style="left:6.05px;top:632.5px;line-height:18px;font-size:12.5px;color:#444;">24</span>
<div class="a" style="left:0px;top:669px;width:25px;height:1px;background:#dadada"></div>
<span class="t" style="left:6.05px;top:651.5px;line-height:18px;font-size:12.5px;color:#444;">25</span>
<div class="a" style="left:0;top:670px;width:25px;height:8px;overflow:hidden"><span class="t" style="left:6px;top:0px;line-height:18px;font-size:12.500px;color:#444">26</span></div>
<!-- left table -->
<div class="a" style="left:41px;top:222px;width:408px;height:448px;background:#000"></div>
<div class="a" style="left:43px;top:224px;width:404px;height:39px;background:#5b9bd5"></div>
<span class="t" style="left:179.50px;top:233.5px;line-height:22px;font-size:15px;color:#000;font-weight:bold;transform:scaleX(1.0408);">Entrada de dados</span>
<div class="a" style="left:43px;top:265px;width:404px;height:17px;background:#bdd7ee"></div>
<span class="t" style="left:221.70px;top:265.7px;line-height:18px;font-size:13px;color:#000;font-weight:bold;transform:scaleX(0.9617);">Telhado</span>
<div class="a" style="left:43px;top:284px;width:198px;height:17px;background:#f2f2f2;border:1px solid #fff"></div>
<svg class="a" style="left:236px;top:284px" width="5" height="5" viewBox="0 0 5 5"><path d="M0 0H5V5Z" fill="#ff0000"/></svg>
<span class="t" style="left:44.80px;top:285.1px;line-height:16px;font-size:12px;color:#000;transform:scaleX(0.9956);">Largura (a)</span>
<div class="a" style="left:242px;top:284px;width:148px;height:17px;background:#fff"></div>
<div class="a" style="left:391px;top:284px;width:56px;height:17px;background:#f2f2f2;border:1px solid #fff"></div>
<span class="t" style="left:364.60px;top:285.1px;line-height:16px;font-size:12px;color:#000;transform:scaleX(0.9933);">5,00</span>
<span class="t" style="left:393.00px;top:285.1px;line-height:16px;font-size:12px;color:#000;transform:scaleX(0.9004);">m</span>
<div class="a" style="left:43px;top:302px;width:198px;height:17px;background:#f2f2f2;border:1px solid #fff"></div>
<svg class="a" style="left:236px;top:302px" width="5" height="5" viewBox="0 0 5 5"><path d="M0 0H5V5Z" fill="#ff0000"/></svg>
<span class="t" style="left:44.80px;top:303.1px;line-height:16px;font-size:12px;color:#000;transform:scaleX(1.0075);">Comprimento (b)</span>
<div class="a" style="left:242px;top:302px;width:148px;height:17px;background:#fff"></div>
<div class="a" style="left:391px;top:302px;width:56px;height:17px;background:#f2f2f2;border:1px solid #fff"></div>
<span class="t" style="left:356.90px;top:303.1px;line-height:16px;font-size:12px;color:#000;transform:scaleX(1.0290);">15,00</span>
<span class="t" style="left:393.00px;top:303.1px;line-height:16px;font-size:12px;color:#000;transform:scaleX(0.9004);">m</span>
<div class="a" style="left:43px;top:320px;width:198px;height:17px;background:#f2f2f2;border:1px solid #fff"></div>
<svg class="a" style="left:236px;top:320px" width="5" height="5" viewBox="0 0 5 5"><path d="M0 0H5V5Z" fill="#ff0000"/></svg>
<span class="t" style="left:44.80px;top:321.1px;line-height:16px;font-size:12px;color:#000;transform:scaleX(1.0335);">Altura (h)</span>
<div class="a" style="left:242px;top:320px;width:148px;height:17px;background:#fff"></div>
<div class="a" style="left:391px;top:320px;width:56px;height:17px;background:#f2f2f2;border:1px solid #fff"></div>
<span class="t" style="left:364.60px;top:321.1px;line-height:16px;font-size:12px;color:#000;transform:scaleX(0.9933);">1,50</span>
<span class="t" style="left:393.00px;top:321.1px;line-height:16px;font-size:12px;color:#000;transform:scaleX(0.9004);">m</span>
<div class="a" style="left:43px;top:338px;width:198px;height:17px;background:#f2f2f2;border:1px solid #fff"></div>
<svg class="a" style="left:236px;top:338px" width="5" height="5" viewBox="0 0 5 5"><path d="M0 0H5V5Z" fill="#ff0000"/></svg>
<span class="t" style="left:44.80px;top:339.1px;line-height:16px;font-size:12px;color:#000;transform:scaleX(1.0545);">Intensidade pluviométrica</span>
<div class="a" style="left:242px;top:338px;width:148px;height:17px;background:#fff"></div>
<div class="a" style="left:391px;top:338px;width:56px;height:17px;background:#f2f2f2;border:1px solid #fff"></div>
<span class="t" style="left:367.40px;top:339.1px;line-height:16px;font-size:12px;color:#000;transform:scaleX(1.0189);">200</span>
<span class="t" style="left:393.00px;top:339.1px;line-height:16px;font-size:12px;color:#000;transform:scaleX(1.0467);">mm/h</span>
<div class="a" style="left:43px;top:356px;width:198px;height:17px;background:#f2f2f2;border:1px solid #fff"></div>
<svg class="a" style="left:236px;top:356px" width="5" height="5" viewBox="0 0 5 5"><path d="M0 0H5V5Z" fill="#ff0000"/></svg>
<span class="t" style="left:44.80px;top:358.1px;line-height:16px;font-size:12px;color:#000;transform:scaleX(1.0574);">Área de contribuição adicional</span>
<div class="a" style="left:242px;top:356px;width:148px;height:17px;background:#fff"></div>
<div class="a" style="left:391px;top:356px;width:56px;height:17px;background:#f2f2f2;border:1px solid #fff"></div>
<span class="t" style="left:364.60px;top:358.1px;line-height:16px;font-size:12px;color:#000;transform:scaleX(0.9933);">0,00</span>
<span class="t" style="left:393.00px;top:358.1px;line-height:16px;font-size:12px;color:#000;transform:scaleX(1.0649);">m²</span>
<div class="a" style="left:43px;top:375px;width:404px;height:17px;background:#bdd7ee"></div>
<span class="t" style="left:229.45px;top:375.7px;line-height:18px;font-size:13px;color:#000;font-weight:bold;transform:scaleX(0.8898);">Calha</span>
<div class="a" style="left:43px;top:394px;width:198px;height:17px;background:#f2f2f2;border:1px solid #fff"></div>
<svg class="a" style="left:236px;top:394px" width="5" height="5" viewBox="0 0 5 5"><path d="M0 0H5V5Z" fill="#ff0000"/></svg>
<span class="t" style="left:44.80px;top:395.1px;line-height:16px;font-size:12px;color:#000;transform:scaleX(1.0872);">Material</span>
<div class="a" style="left:242px;top:394px;width:205px;height:17px;background:#fff"></div>
<span class="t" style="left:336.00px;top:395.1px;line-height:16px;font-size:12px;color:#000;transform:scaleX(0.8995);">Aço</span>
<div class="a" style="left:43px;top:412px;width:198px;height:18px;background:#f2f2f2;border:1px solid #fff"></div>
<svg class="a" style="left:236px;top:412px" width="5" height="5" viewBox="0 0 5 5"><path d="M0 0H5V5Z" fill="#ff0000"/></svg>
<span class="t" style="left:44.80px;top:414.1px;line-height:16px;font-size:12px;color:#000;">Tipo de seção</span>
<div class="a" style="left:242px;top:412px;width:205px;height:18px;background:#fff"></div>
<div class="a" style="left:43px;top:431px;width:198px;height:17px;background:#f2f2f2;border:1px solid #fff"></div>
<svg class="a" style="left:236px;top:431px" width="5" height="5" viewBox="0 0 5 5"><path d="M0 0H5V5Z" fill="#ff0000"/></svg>
<span class="t" style="left:44.80px;top:432.1px;line-height:16px;font-size:12px;color:#000;transform:scaleX(1.0993);">Inclinação</span>
<div class="a" style="left:242px;top:431px;width:148px;height:17px;background:#fff"></div>
<div class="a" style="left:391px;top:431px;width:56px;height:17px;background:#f2f2f2;border:1px solid #fff"></div>
<div class="a" style="left:43px;top:449px;width:198px;height:17px;background:#f2f2f2;border:1px solid #fff"></div>
<svg class="a" style="left:236px;top:449px" width="5" height="5" viewBox="0 0 5 5"><path d="M0 0H5V5Z" fill="#ff0000"/></svg>
<span class="t" style="left:44.80px;top:450.1px;line-height:16px;font-size:12px;color:#000;transform:scaleX(1.0485);">Altura da área molhada</span>
<div class="a" style="left:242px;top:449px;width:148px;height:17px;background:#fff"></div>
<div class="a" style="left:391px;top:449px;width:56px;height:17px;background:#f2f2f2;border:1px solid #fff"></div>
<div class="a" style="left:43px;top:467px;width:198px;height:16px;background:#f2f2f2;border:1px solid #fff"></div>
<svg class="a" style="left:236px;top:467px" width="5" height="5" viewBox="0 0 5 5"><path d="M0 0H5V5Z" fill="#ff0000"/></svg>
<span class="t" style="left:44.80px;top:468.1px;line-height:16px;font-size:12px;color:#000;transform:scaleX(1.0432);">Largura interna</span>
<div class="a" style="left:242px;top:467px;width:148px;height:16px;background:#fff"></div>
<div class="a" style="left:391px;top:467px;width:56px;height:16px;background:#f2f2f2;border:1px solid #fff"></div>
<div class="a" style="left:43px;top:485px;width:404px;height:17px;background:#bdd7ee"></div>
<span class="t" style="left:193.30px;top:485.7px;line-height:18px;font-size:13px;color:#000;font-weight:bold;transform:scaleX(0.9645);">Condutor vertical</span>
<div class="a" style="left:43px;top:504px;width:198px;height:17px;background:#f2f2f2;border:1px solid #fff"></div>
<svg class="a" style="left:236px;top:504px" width="5" height="5" viewBox="0 0 5 5"><path d="M0 0H5V5Z" fill="#ff0000"/></svg>
<span class="t" style="left:44.80px;top:505.1px;line-height:16px;font-size:12px;color:#000;transform:scaleX(0.9895);">Qtd. De Condutores</span>
<div class="a" style="left:242px;top:504px;width:205px;height:17px;background:#fff"></div>
<span class="t" style="left:341.96px;top:505.1px;line-height:16px;font-size:12px;color:#000;">1</span>
<div class="a" style="left:43px;top:522px;width:198px;height:18px;background:#f2f2f2;border:1px solid #fff"></div>
<svg class="a" style="left:236px;top:522px" width="5" height="5" viewBox="0 0 5 5"><path d="M0 0H5V5Z" fill="#ff0000"/></svg>
<span class="t" style="left:44.80px;top:524.1px;line-height:16px;font-size:12px;color:#000;transform:scaleX(1.1176);">Material</span>
<div class="a" style="left:242px;top:522px;width:205px;height:18px;background:#fff"></div>
<span class="t" style="left:323.45px;top:524.1px;line-height:16px;font-size:12px;color:#000;transform:scaleX(1.0400);">Plástico</span>
<div class="a" style="left:43px;top:541px;width:198px;height:18px;background:#f2f2f2;border:1px solid #fff"></div>
<svg class="a" style="left:236px;top:541px" width="5" height="5" viewBox="0 0 5 5"><path d="M0 0H5V5Z" fill="#ff0000"/></svg>
<span class="t" style="left:44.80px;top:543.1px;line-height:16px;font-size:12px;color:#000;transform:scaleX(1.0597);">Diâmetro interno</span>
<div class="a" style="left:242px;top:541px;width:148px;height:18px;background:#fff"></div>
<div class="a" style="left:391px;top:541px;width:56px;height:18px;background:#f2f2f2;border:1px solid #fff"></div>
<span class="t" style="left:351.00px;top:543.1px;line-height:16px;font-size:12px;color:#000;transform:scaleX(1.0026);">100,00</span>
<span class="t" style="left:393.00px;top:543.1px;line-height:16px;font-size:12px;color:#000;transform:scaleX(0.9854);">mm</span>
<div class="a" style="left:43px;top:560px;width:198px;height:16px;background:#f2f2f2;border:1px solid #fff"></div>
<svg class="a" style="left:236px;top:560px" width="5" height="5" viewBox="0 0 5 5"><path d="M0 0H5V5Z" fill="#ff0000"/></svg>
<span class="t" style="left:44.80px;top:561.1px;line-height:16px;font-size:12px;color:#000;transform:scaleX(1.0215);">Taxa de ocupação</span>
<div class="a" style="left:242px;top:560px;width:148px;height:16px;background:#fff"></div>
<div class="a" style="left:391px;top:560px;width:56px;height:16px;background:#f2f2f2;border:1px solid #fff"></div>
<span class="t" style="left:358.60px;top:561.1px;line-height:16px;font-size:12px;color:#000;transform:scaleX(0.9724);">25,00</span>
<span class="t" style="left:393.00px;top:561.1px;line-height:16px;font-size:12px;color:#000;transform:scaleX(0.8904);">%</span>
<div class="a" style="left:43px;top:578px;width:404px;height:17px;background:#bdd7ee"></div>
<span class="t" style="left:185.05px;top:578.7px;line-height:18px;font-size:13px;color:#000;font-weight:bold;transform:scaleX(0.9686);">Condutor horizontal</span>
<div class="a" style="left:43px;top:597px;width:198px;height:17px;background:#f2f2f2;border:1px solid #fff"></div>
<svg class="a" style="left:236px;top:597px" width="5" height="5" viewBox="0 0 5 5"><path d="M0 0H5V5Z" fill="#ff0000"/></svg>
<span class="t" style="left:44.80px;top:598.1px;line-height:16px;font-size:12px;color:#000;transform:scaleX(0.9895);">Qtd. De Condutores</span>
<div class="a" style="left:242px;top:597px;width:205px;height:17px;background:#fff"></div>
<span class="t" style="left:341.96px;top:598.1px;line-height:16px;font-size:12px;color:#000;">1</span>
<div class="a" style="left:43px;top:615px;width:198px;height:17px;background:#f2f2f2;border:1px solid #fff"></div>
<svg class="a" style="left:236px;top:615px" width="5" height="5" viewBox="0 0 5 5"><path d="M0 0H5V5Z" fill="#ff0000"/></svg>
<span class="t" style="left:44.80px;top:616.1px;line-height:16px;font-size:12px;color:#000;transform:scaleX(1.1176);">Material</span>
<div class="a" style="left:242px;top:615px;width:205px;height:17px;background:#fff"></div>
<span class="t" style="left:323.45px;top:616.1px;line-height:16px;font-size:12px;color:#000;transform:scaleX(1.0400);">Plástico</span>
<div class="a" style="left:43px;top:633px;width:198px;height:17px;background:#f2f2f2;border:1px solid #fff"></div>
<svg class="a" style="left:236px;top:633px" width="5" height="5" viewBox="0 0 5 5"><path d="M0 0H5V5Z" fill="#ff0000"/></svg>
<span class="t" style="left:44.80px;top:634.1px;line-height:16px;font-size:12px;color:#000;transform:scaleX(1.0597);">Diâmetro interno</span>
<div class="a" style="left:242px;top:633px;width:148px;height:17px;background:#fff"></div>
<div class="a" style="left:391px;top:633px;width:56px;height:17px;background:#f2f2f2;border:1px solid #fff"></div>
<span class="t" style="left:351.00px;top:634.1px;line-height:16px;font-size:12px;color:#000;transform:scaleX(1.0026);">100,00</span>
<span class="t" style="left:393.00px;top:634.1px;line-height:16px;font-size:12px;color:#000;transform:scaleX(0.9854);">mm</span>
<div class="a" style="left:43px;top:651px;width:198px;height:17px;background:#f2f2f2;border:1px solid #fff"></div>
<svg class="a" style="left:236px;top:651px" width="5" height="5" viewBox="0 0 5 5"><path d="M0 0H5V5Z" fill="#ff0000"/></svg>
<span class="t" style="left:44.80px;top:653.1px;line-height:16px;font-size:12px;color:#000;transform:scaleX(1.0993);">Inclinação</span>
<div class="a" style="left:242px;top:651px;width:148px;height:17px;background:#fff"></div>
<div class="a" style="left:391px;top:651px;width:56px;height:17px;background:#f2f2f2;border:1px solid #fff"></div>
<span class="t" style="left:371.40px;top:653.1px;line-height:16px;font-size:12px;color:#000;transform:scaleX(0.9831);">1,0</span>
<span class="t" style="left:393.00px;top:653.1px;line-height:16px;font-size:12px;color:#000;transform:scaleX(0.8904);">%</span>
<div class="a" style="left:240px;top:392px;width:210px;height:21px;border:2px solid #217346;background:transparent"></div>
<div class="a" style="left:446px;top:409px;width:5px;height:5px;background:#217346;border:1px solid #fff"></div>
<!-- saida table -->
<div class="a" style="left:483px;top:429px;width:460px;height:112px;background:#000"></div>
<div class="a" style="left:485px;top:431px;width:456px;height:34px;background:#5b9bd5"></div>
<span class="t" style="left:657.65px;top:437.5px;line-height:22px;font-size:15px;color:#000;font-weight:bold;transform:scaleX(1.0242);">Saída de dados</span>
<div class="a" style="left:485px;top:467px;width:319px;height:17px;background:#f2f2f2;border:1px solid #fff"></div>
<div class="a" style="left:805px;top:467px;width:79px;height:17px;background:#fff"></div>
<div class="a" style="left:885px;top:467px;width:56px;height:17px;background:#f2f2f2;border:1px solid #fff"></div>
<svg class="a" style="left:799px;top:467px" width="5" height="5" viewBox="0 0 5 5"><path d="M0 0H5V5Z" fill="#ff0000"/></svg>
<span class="t" style="left:487.50px;top:468.1px;line-height:16px;font-size:12px;color:#000;transform:scaleX(1.0145);">Vazão do telhado (Qt)</span>
<span class="t" style="left:844.30px;top:468.1px;line-height:16px;font-size:12px;color:#000;transform:scaleX(1.0490);">287,50</span>
<span class="t" style="left:886.40px;top:468.1px;line-height:16px;font-size:12px;color:#000;transform:scaleX(1.0599);">L/min</span>
<div class="a" style="left:485px;top:485px;width:319px;height:18px;background:#f2f2f2;border:1px solid #fff"></div>
<div class="a" style="left:805px;top:485px;width:79px;height:18px;background:#fff"></div>
<div class="a" style="left:885px;top:485px;width:56px;height:18px;background:#f2f2f2;border:1px solid #fff"></div>
<svg class="a" style="left:799px;top:485px" width="5" height="5" viewBox="0 0 5 5"><path d="M0 0H5V5Z" fill="#ff0000"/></svg>
<span class="t" style="left:487.50px;top:487.1px;line-height:16px;font-size:12px;color:#000;transform:scaleX(1.0034);">Capacidade de vazão da calha (Qc)</span>
<span class="t" style="left:837.70px;top:487.1px;line-height:16px;font-size:12px;color:#000;transform:scaleX(1.0397);">1329,60</span>
<span class="t" style="left:886.40px;top:487.1px;line-height:16px;font-size:12px;color:#000;transform:scaleX(1.0599);">L/min</span>
<div class="a" style="left:485px;top:504px;width:319px;height:17px;background:#f2f2f2;border:1px solid #fff"></div>
<div class="a" style="left:805px;top:504px;width:79px;height:17px;background:#fff"></div>
<div class="a" style="left:885px;top:504px;width:56px;height:17px;background:#f2f2f2;border:1px solid #fff"></div>
<svg class="a" style="left:799px;top:504px" width="5" height="5" viewBox="0 0 5 5"><path d="M0 0H5V5Z" fill="#ff0000"/></svg>
<span class="t" style="left:487.50px;top:505.1px;line-height:16px;font-size:12px;color:#000;transform:scaleX(1.0215);">Capacidade de vazão do condutor vertical (Qv)</span>
<span class="t" style="left:844.30px;top:505.1px;line-height:16px;font-size:12px;color:#000;transform:scaleX(1.0490);">363,37</span>
<span class="t" style="left:886.40px;top:505.1px;line-height:16px;font-size:12px;color:#000;transform:scaleX(1.0599);">L/min</span>
<div class="a" style="left:485px;top:522px;width:319px;height:17px;background:#f2f2f2;border:1px solid #fff"></div>
<div class="a" style="left:805px;top:522px;width:79px;height:17px;background:#fff"></div>
<div class="a" style="left:885px;top:522px;width:56px;height:17px;background:#f2f2f2;border:1px solid #fff"></div>
<svg class="a" style="left:799px;top:522px" width="5" height="5" viewBox="0 0 5 5"><path d="M0 0H5V5Z" fill="#ff0000"/></svg>
<span class="t" style="left:487.50px;top:524.1px;line-height:16px;font-size:12px;color:#000;transform:scaleX(1.0267);">Capacidade de vazão do condutor horizontal (Qh)</span>
<span class="t" style="left:844.30px;top:524.1px;line-height:16px;font-size:12px;color:#000;transform:scaleX(1.0490);">287,12</span>
<span class="t" style="left:886.40px;top:524.1px;line-height:16px;font-size:12px;color:#000;transform:scaleX(1.0599);">L/min</span>
<!-- verificacoes table -->
<div class="a" style="left:483px;top:576px;width:460px;height:94px;background:#000"></div>
<div class="a" style="left:485px;top:578px;width:456px;height:35px;background:#5b9bd5"></div>
<span class="t" style="left:668.80px;top:586px;line-height:22px;font-size:15px;color:#000;font-weight:bold;transform:scaleX(1.0324);">Verificações</span>
<div class="a" style="left:485px;top:615px;width:319px;height:17px;background:#fff"></div>
<div class="a" style="left:805px;top:615px;width:136px;height:17px;background:#f2f2f2;border:1px solid #fff"></div>
<svg class="a" style="left:936px;top:615px" width="5" height="5" viewBox="0 0 5 5"><path d="M0 0H5V5Z" fill="#ff0000"/></svg>
<span class="t" style="left:567.25px;top:616.1px;line-height:16px;font-size:12px;color:#000;transform:scaleX(1.0114);">OK! A calha suporta a vazão</span>
<span class="t" style="left:854.45px;top:616.1px;line-height:16px;font-size:12px;color:#000;transform:scaleX(0.9477);">Qc ≥ Qt</span>
<div class="a" style="left:485px;top:633px;width:319px;height:17px;background:#fff"></div>
<div class="a" style="left:805px;top:633px;width:136px;height:17px;background:#f2f2f2;border:1px solid #fff"></div>
<svg class="a" style="left:936px;top:633px" width="5" height="5" viewBox="0 0 5 5"><path d="M0 0H5V5Z" fill="#ff0000"/></svg>
<span class="t" style="left:534.30px;top:634.1px;line-height:16px;font-size:12px;color:#000;transform:scaleX(1.0326);">OK! O condutor vertical suporta a vazão</span>
<span class="t" style="left:854.45px;top:634.1px;line-height:16px;font-size:12px;color:#000;transform:scaleX(0.9477);">Qv ≥ Qt</span>
<div class="a" style="left:485px;top:651px;width:319px;height:17px;background:#ffc7ce"></div>
<div class="a" style="left:805px;top:651px;width:136px;height:17px;background:#f2f2f2;border:1px solid #fff"></div>
<svg class="a" style="left:936px;top:651px" width="5" height="5" viewBox="0 0 5 5"><path d="M0 0H5V5Z" fill="#ff0000"/></svg>
<span class="t" style="left:517.85px;top:653.1px;line-height:16px;font-size:12px;color:#9c0006;transform:scaleX(1.0319);">Não OK! Redimensionar o condutor horizontal</span>
<span class="t" style="left:854.45px;top:653.1px;line-height:16px;font-size:12px;color:#000;transform:scaleX(0.9232);">Qh &lt; Qt</span>
<!-- buttons -->
<div class="a" style="left:485px;top:241px;width:458px;height:93px;background:#5b9bd5;border:1px solid #41719c;border-radius:17px"></div>
<span class="t" style="left:549.05px;top:267px;line-height:40px;font-size:31.5px;color:#fff;font-weight:bold;transform:scaleX(1.0087);">IMPRIMIR MEMORIAL</span>
<div class="a" style="left:516px;top:359px;width:395px;height:43px;background:#5b9bd5;border:1px solid #41719c;border-radius:7px"></div>
<span class="t" style="left:582.70px;top:368.5px;line-height:24px;font-size:18px;color:#fff;font-weight:bold;">LIMPAR ENTRADA DE DADOS</span>
<!-- validation dropdown -->
<div class="a" style="left:449px;top:395px;width:17px;height:17px;background:linear-gradient(#f2f2f2,#dcdcdc);border:1px solid #a5a5a5"></div>
<svg class="a" style="left:454px;top:401px" width="7" height="4" viewBox="0 0 7 4"><path d="M0 0H7L3.500 4Z" fill="#444"/></svg>
<div class="a" style="left:241px;top:411px;width:225px;height:98px;background:#fff;border:1px solid #000"></div>
<div class="a" style="left:242px;top:412px;width:209px;height:12px;background:#3399ff"></div>
<span class="t" style="left:246.50px;top:412.3px;line-height:12px;font-size:10.5px;color:#fff;transform:scaleX(0.9949);">Aço</span>
<span class="t" style="left:246.50px;top:424.3px;line-height:12px;font-size:10.5px;color:#000;transform:scaleX(0.9915);">Metais não-ferrosos</span>
<span class="t" style="left:246.50px;top:436.3px;line-height:12px;font-size:10.5px;color:#000;transform:scaleX(0.9768);">Ferro fundido</span>
<span class="t" style="left:246.50px;top:448.3px;line-height:12px;font-size:10.5px;color:#000;transform:scaleX(0.9899);">Concreto alisado</span>
<span class="t" style="left:246.50px;top:460.3px;line-height:12px;font-size:10.5px;color:#000;transform:scaleX(1.0119);">Concreto não-alisado</span>
<span class="t" style="left:246.50px;top:472.3px;line-height:12px;font-size:10.5px;color:#000;transform:scaleX(0.9794);">Cerâmica</span>
<span class="t" style="left:246.50px;top:484.3px;line-height:12px;font-size:10.5px;color:#000;transform:scaleX(0.9743);">Alvenaria revestida</span>
<span class="t" style="left:246.50px;top:496.3px;line-height:12px;font-size:10.5px;color:#000;transform:scaleX(0.9860);">Alvenaria de tijolos não-revestida</span>
<div class="a" style="left:451px;top:412px;width:14px;height:96px;background:linear-gradient(90deg,#ececec,#fbfbfb)"></div>
<svg class="a" style="left:455px;top:416px" width="6" height="4" viewBox="0 0 6 4"><path d="M0 4H6L3 0Z" fill="#555"/></svg>
<svg class="a" style="left:455px;top:499px" width="6" height="4" viewBox="0 0 6 4"><path d="M0 0H6L3 4Z" fill="#555"/></svg>
<div class="a" style="left:452px;top:441px;width:13px;height:52px;background:linear-gradient(90deg,#f6f6f6,#dcdcdc);border:1px solid #9a9a9a;border-radius:2px"></div>
<div class="a" style="left:455px;top:464px;width:7px;height:1px;background:#777"></div>
<div class="a" style="left:455px;top:466px;width:7px;height:1px;background:#777"></div>
<div class="a" style="left:455px;top:468px;width:7px;height:1px;background:#777"></div>
<!-- house picture -->
<svg class="a" style="left:0;top:0" width="1366" height="768" viewBox="0 0 1366 768" font-family="Liberation Sans, sans-serif" font-size="13" fill="#111">
<g stroke="#3a3a3a" stroke-width="1" fill="none">
<path d="M1023.500 262H1226.500M1023.500 257V269.500M1226.500 257V313M1021 264L1026 260M1224 264L1229 260"/>
<path d="M1008.800 271V328.500M1003.500 274.500H1020M1003.500 325.200H1020M1006.500 276.500L1011 272.500M1006.500 327.200L1011 323.200"/>
</g>
<path d="M1023.400 277L1210 318.500V439.500H1023.400Z" fill="#c7c9ca" stroke="#55585a" stroke-width=".8"/>
<path d="M1023.4 277.2L1226.5 322.3L1226.5 325.8L1023.4 280.4Z" fill="#b4561a" stroke="#6e2f0c" stroke-width=".6"/>
<path d="M1023.4 274.2L1042.7 276.7L1042.7 280.9L1023.4 277.6Z" fill="#e0702a" stroke="#8a3a10" stroke-width=".7"/><path d="M1041.9 278.3L1061.1 280.8L1061.1 285.0L1041.9 281.7Z" fill="#e0702a" stroke="#8a3a10" stroke-width=".7"/><path d="M1060.3 282.4L1079.6 284.9L1079.6 289.1L1060.3 285.8Z" fill="#e0702a" stroke="#8a3a10" stroke-width=".7"/><path d="M1078.8 286.5L1098.1 289.0L1098.1 293.2L1078.8 289.9Z" fill="#e0702a" stroke="#8a3a10" stroke-width=".7"/><path d="M1097.3 290.6L1116.5 293.1L1116.5 297.3L1097.3 294.0Z" fill="#e0702a" stroke="#8a3a10" stroke-width=".7"/><path d="M1115.7 294.7L1135.0 297.2L1135.0 301.4L1115.7 298.1Z" fill="#e0702a" stroke="#8a3a10" stroke-width=".7"/><path d="M1134.2 298.8L1153.4 301.3L1153.4 305.5L1134.2 302.2Z" fill="#e0702a" stroke="#8a3a10" stroke-width=".7"/><path d="M1152.6 302.9L1171.9 305.4L1171.9 309.6L1152.6 306.3Z" fill="#e0702a" stroke="#8a3a10" stroke-width=".7"/><path d="M1171.1 307.0L1190.4 309.5L1190.4 313.7L1171.1 310.4Z" fill="#e0702a" stroke="#8a3a10" stroke-width=".7"/><path d="M1189.6 311.1L1208.8 313.6L1208.8 317.8L1189.6 314.5Z" fill="#e0702a" stroke="#8a3a10" stroke-width=".7"/><path d="M1208.0 315.2L1227.3 317.7L1227.3 321.9L1208.0 318.6Z" fill="#e0702a" stroke="#8a3a10" stroke-width=".7"/><path d="M1030.0 281.2l2.6 .6l-1.6 5.400l-2.600 -.6Z" fill="#c8601e" stroke="#7a3410" stroke-width=".6"/><path d="M1086.5 293.7l2.6 .6l-1.6 5.400l-2.600 -.6Z" fill="#c8601e" stroke="#7a3410" stroke-width=".6"/><path d="M1143.5 306.4l2.6 .6l-1.6 5.400l-2.600 -.6Z" fill="#c8601e" stroke="#7a3410" stroke-width=".6"/><path d="M1200.0 318.9l2.6 .6l-1.6 5.400l-2.600 -.6Z" fill="#c8601e" stroke="#7a3410" stroke-width=".6"/>
<rect x="1082.500" y="356.200" width="70" height="46" fill="#a9dcf5" stroke="#3c3f42" stroke-width="1.600"/>
<path d="M1117.600 356V402.500" stroke="#3c3f42" stroke-width="1.600"/>
<rect x="1001" y="439.300" width="292.500" height="25.600" fill="#cd6a28"/>
<path d="M1001 439.300H1293.500M1001 464.900H1293.500M1001 437V467.500M1293.500 437V467.500" stroke="#3a2a20" stroke-width=".9" fill="none"/>
<path d="M1226.200 322.500V331.200H1238.400V322.500" fill="none" stroke="#111" stroke-width="2"/>
<path d="M1232.800 332V337C1232.800 340 1231 341.500 1229 343.500L1216 354.500C1214.400 356 1213.400 357.500 1213.400 360V444C1213.400 449 1216 451.300 1220 451.300H1228" fill="none" stroke="#333" stroke-width="5.600"/>
<path d="M1232.800 332V337C1232.800 340 1231 341.500 1229 343.500L1216 354.500C1214.400 356 1213.400 357.500 1213.400 360V444C1213.400 449 1216 451.300 1220 451.300H1228" fill="none" stroke="#f4f4f4" stroke-width="3.600"/>
<path d="M1223.300 345.500L1227.300 349.500M1210.200 363.500H1216.600M1210.200 365.500H1216.600M1222.500 448V454.500M1224.800 448V454.500" stroke="#333" stroke-width="1" fill="none"/>
<rect x="1249" y="448.700" width="44.500" height="5" fill="#f6f6f6" stroke="#333" stroke-width=".9"/>
<path d="M1250.500 447.500V455" stroke="#333" stroke-width="1.600"/>
<rect x="1227.300" y="439.300" width="21.600" height="19" fill="#6f7072" stroke="#2e2e2e" stroke-width="1.200"/>
<path d="M1226 439H1250" stroke="#2e2e2e" stroke-width="1.600"/>
<g stroke="#3a3a3a" stroke-width=".9" fill="none"><path d="M1293 382.200H1235.500L1214.500 405.500"/><path d="M1327.500 426.200H1259L1273.800 451"/></g>
</svg>
<span class="t" style="left:1120.89px;top:246px;line-height:18px;font-size:13px;color:#111;">a</span>
<span class="t" style="left:998.89px;top:291.5px;line-height:18px;font-size:13px;color:#111;">h</span>
<span class="t" style="left:1245.60px;top:319px;line-height:18px;font-size:13px;color:#111;transform:scaleX(0.9951);">Calha</span>
<span class="t" style="left:1234.45px;top:350.3px;line-height:18px;font-size:13px;color:#111;">Condutor</span>
<span class="t" style="left:1240.45px;top:364.8px;line-height:18px;font-size:13px;color:#111;transform:scaleX(0.9922);">Vertical</span>
<span class="t" style="left:1265.75px;top:396px;line-height:18px;font-size:13px;color:#111;">Condutor</span>
<span class="t" style="left:1263.45px;top:409.5px;line-height:18px;font-size:13px;color:#111;transform:scaleX(0.9961);">Horizontal</span>
<span class="t" style="left:1220.20px;top:464px;line-height:18px;font-size:13px;color:#111;transform:scaleX(0.9688);">Caixa</span>
<span class="t" style="left:1211.80px;top:477.5px;line-height:18px;font-size:13px;color:#111;transform:scaleX(0.9850);">Coletora</span>
<!-- gutter section -->
<svg class="a" style="left:0;top:0" width="1366" height="768" viewBox="0 0 1366 768">
<rect x="1066.500" y="567" width="130" height="38.500" fill="#00ffff"/>
<path d="M1066.500 567H1196.500" stroke="#333" stroke-width=".9"/>
<path d="M1057.500 527.400H1066.400V605.600H1196.400V527.400H1205" fill="none" stroke="#111" stroke-width="2"/>
<g stroke="#555" stroke-width="1" fill="none">
<path d="M1028.500 566V606M1017.500 567.300H1051M1017.500 605.800H1051"/>
<path d="M1235.500 524.500V607M1212.500 527.500H1245M1212.500 605.800H1245"/>
<path d="M1063 642.700H1200M1066.500 620V654M1196.500 620V654"/>
</g>
<g stroke="#111" stroke-width="1.700" fill="none">
<path d="M1024.500 562.800L1033 571.300M1024.500 601.300L1033 609.800M1231.500 523L1240 531.500M1231.500 601.300L1240 609.800M1062.300 646.700L1070.800 638.200M1192.300 646.700L1200.800 638.200"/>
</g></svg>
<span class="t" style="left:989.50px;top:579px;line-height:18px;font-size:13px;color:#111;font-weight:bold;transform:scaleX(0.9683);">7,50</span>
<span class="t" style="left:1245.40px;top:559.8px;line-height:18px;font-size:13px;color:#111;font-weight:bold;transform:scaleX(0.9652);">12,50</span>
<span class="t" style="left:1117.40px;top:652.2px;line-height:18px;font-size:13px;color:#111;font-weight:bold;transform:scaleX(0.9806);">25,00</span>
<!-- sheet tab strip -->
<div class="a" style="left:0px;top:678px;width:1366px;height:28px;background:#f5f5f5"></div>
<div class="a" style="left:0px;top:678px;width:1345px;height:1px;background:#ababab"></div>
<div class="a" style="left:100px;top:678px;width:151px;height:25px;background:#fff;border-left:1px solid #ababab;border-right:1px solid #ababab"></div>
<div class="a" style="left:100px;top:701px;width:151px;height:2px;background:#217346"></div>
<svg class="a" style="left:27px;top:687px" width="5" height="8" viewBox="0 0 5 8"><path d="M5 0V8L0 4Z" fill="#c6c6c6"/></svg>
<svg class="a" style="left:55px;top:687px" width="5" height="8" viewBox="0 0 5 8"><path d="M0 0V8L5 4Z" fill="#c6c6c6"/></svg>
<span class="t" style="left:112.50px;top:683px;line-height:18px;font-size:13px;color:#217346;font-weight:bold;transform:scaleX(0.9629);">Calhas e Condutores</span>
<span class="t" style="left:265.00px;top:683px;line-height:18px;font-size:13px;color:#444;transform:scaleX(1.0161);">Memorial de Cálculo</span>
<div class="a" style="left:400px;top:683px;width:1px;height:18px;background:#ababab"></div>
<svg class="a" style="left:433px;top:683px" width="18" height="18" viewBox="0 0 18 18"><circle cx="9" cy="9" r="7.700" fill="none" stroke="#666" stroke-width="1.200"/><path d="M5 9H13M9 5V13" stroke="#666" stroke-width="1.600"/></svg>
<div class="a" style="left:819px;top:686px;width:2px;height:2px;background:#b0b0b0"></div>
<div class="a" style="left:819px;top:691px;width:2px;height:2px;background:#b0b0b0"></div>
<div class="a" style="left:819px;top:696px;width:2px;height:2px;background:#b0b0b0"></div>
<div class="a" style="left:836px;top:685px;width:509px;height:15px;background:#e9e9e9"></div>
<div class="a" style="left:836px;top:685px;width:15px;height:15px;background:#fff;border:1px solid #ababab"></div>
<svg class="a" style="left:841px;top:689px" width="4" height="7" viewBox="0 0 4 7"><path d="M4 0V7L0 3.500Z" fill="#555"/></svg>
<div class="a" style="left:851px;top:685px;width:222px;height:15px;background:#fff;border:1px solid #ababab"></div>
<div class="a" style="left:1330px;top:685px;width:15px;height:15px;background:#fff;border:1px solid #ababab"></div>
<svg class="a" style="left:1336px;top:689px" width="4" height="7" viewBox="0 0 4 7"><path d="M0 0V7L4 3.500Z" fill="#555"/></svg>
<!-- vertical scrollbar -->
<div class="a" style="left:1345px;top:189px;width:21px;height:492px;background:#fff"></div>
<div class="a" style="left:1348px;top:206px;width:15px;height:459px;background:#f3f3f3"></div>
<div class="a" style="left:1348px;top:191px;width:15px;height:15px;background:#fff;border:1px solid #ababab"></div>
<svg class="a" style="left:1352px;top:196px" width="7" height="4" viewBox="0 0 7 4"><path d="M0 4H7L3.500 0Z" fill="#777"/></svg>
<div class="a" style="left:1348px;top:206px;width:15px;height:21px;background:#fff;border:1px solid #ababab"></div>
<div class="a" style="left:1348px;top:664px;width:15px;height:15px;background:#fff;border:1px solid #ababab"></div>
<svg class="a" style="left:1352px;top:670px" width="7" height="4" viewBox="0 0 7 4"><path d="M0 0H7L3.500 4Z" fill="#777"/></svg>
<!-- status bar -->
<div class="a" style="left:0px;top:706px;width:1366px;height:22px;background:#217346"></div>
<span class="t" style="left:7.00px;top:709.3px;line-height:16px;font-size:11px;color:#fff;transform:scaleX(0.9283);">PRONTO</span>
<svg class="a" style="left:71px;top:710px" width="14" height="14" viewBox="0 0 14 14"><circle cx="3" cy="3.200" r="3" fill="#fff"/><path d="M7.500 2.500H12.500V12.500H1.500V7.500" fill="none" stroke="#fff" stroke-width="1.200"/><path d="M3.500 8H5M6.500 8H8M9.500 8H11M3.500 10.500H5M6.500 10.500H8M9.500 10.500H11M6.500 5.500H8M9.500 5.500H11" stroke="#fff" stroke-width="1.200"/></svg>
<div class="a" style="left:1080px;top:706px;width:38px;height:22px;background:#0f5c32"></div>
<svg class="a" style="left:1092px;top:710px" width="13" height="13" viewBox="0 0 13 13"><path d="M0.500 0.500H12.500V12.500H0.500ZM4.500 0.500V12.500M8.500 0.500V12.500M0.500 4.500H12.500M0.500 8.500H12.500" fill="none" stroke="#fff" stroke-width="1"/></svg>
<svg class="a" style="left:1130px;top:710px" width="14" height="13" viewBox="0 0 14 13"><path d="M0.500 0.500H13.500V12.500H0.500Z" fill="none" stroke="#fff" stroke-width="1"/><path d="M3.500 2.500H10.500V10.500H3.500Z" fill="none" stroke="#fff" stroke-width="1"/><path d="M5 4.500H9M5 6.500H9M5 8.500H9" stroke="#fff" stroke-width=".9"/></svg>
<svg class="a" style="left:1168px;top:710px" width="14" height="13" viewBox="0 0 14 13"><path d="M0.500 0.500H13.500V12.500H0.500Z" fill="none" stroke="#fff" stroke-width="1"/><path d="M1 1H5.500V7.500H1Z M7 1H9.500V7.500H7Z" fill="#fff"/></svg>
<div class="a" style="left:1199px;top:716px;width:6px;height:2px;background:#fff"></div>
<div class="a" style="left:1209px;top:716px;width:100px;height:1px;background:#fff"></div>
<div class="a" style="left:1252px;top:711px;width:4px;height:11px;background:#fff"></div>
<div class="a" style="left:1259px;top:714px;width:1px;height:5px;background:#fff"></div>
<div class="a" style="left:1313px;top:716px;width:8px;height:2px;background:#fff"></div>
<div class="a" style="left:1316px;top:713px;width:2px;height:8px;background:#fff"></div>
<span class="t" style="left:1335.50px;top:709.3px;line-height:16px;font-size:12px;color:#fff;transform:scaleX(0.8952);">90%</span>
<!-- taskbar -->
<div class="a" style="left:0px;top:728px;width:1366px;height:40px;background:linear-gradient(#141c26,#0a0e15 30%,#080b11)"></div>
<div class="a" style="left:0px;top:728px;width:1366px;height:1px;background:#16241f"></div>
<div class="a" style="left:0px;top:729px;width:1366px;height:1px;background:#55626a"></div>
<div class="a" style="left:618px;top:729px;width:58px;height:39px;background:linear-gradient(135deg,#b4b6b8,#8e9092 45%,#5e6062);border:1px solid #d8dadb;border-radius:3px"></div>
<svg class="a" style="left:631px;top:732px" width="33" height="32" viewBox="0 0 33 32">
<rect x="15" y="4.500" width="17" height="23" fill="#fff" stroke="#1e6b41" stroke-width="1.200"/>
<path d="M19 9H30M19 13.500H30M19 18H30M19 22.500H30M24.500 5V27" stroke="#1e6b41" stroke-width="1.600"/>
<path d="M0 3.500L19 0V32L0 28.500Z" fill="#1e6b41"/>
<path d="M5 9.500L13 22.500M13 9.500L5 22.500" stroke="#fff" stroke-width="2.800"/></svg>
<svg class="a" style="left:8.300px;top:729.500px" width="38" height="38" viewBox="0 0 38 38">
<defs><radialGradient id="orb" cx="50%" cy="95%" r="75%"><stop offset="0" stop-color="#22d8ff"/><stop offset=".3" stop-color="#0f86cf"/><stop offset=".7" stop-color="#0c4f92"/><stop offset="1" stop-color="#274a78"/></radialGradient>
<linearGradient id="orbg" x1="0" y1="0" x2="0" y2="1"><stop offset="0" stop-color="#c4d8e8" stop-opacity=".85"/><stop offset="1" stop-color="#7fa6c8" stop-opacity=".35"/></linearGradient></defs>
<circle cx="19" cy="19" r="18.200" fill="url(#orb)" stroke="#9db4c8" stroke-width="1"/>
<path d="M1.800 18C2 8 9.500 1.500 19 1.500S36 8 36.200 18C28 21.500 10 21.500 1.800 18Z" fill="url(#orbg)"/>
<path d="M9.500 9.800C12.500 7.800 15.500 7.600 18.800 9.300L17 17C14 15.400 11 15.400 7.700 17.200Z" fill="#ee5a24"/>
<path d="M20.300 10C23.500 11.800 26.500 11.500 30 9.800L28 17.500C24.800 19.200 21.800 19.200 18.500 17.700Z" fill="#8fc640"/>
<path d="M7.200 18.800C10.500 17 13.500 17 16.600 18.600L14.800 26.300C11.800 24.800 8.800 24.800 5.500 26.600Z" fill="#2f9fe0"/>
<path d="M18.100 19.300C21.300 20.800 24.300 20.800 27.600 19.200L25.800 27C22.500 28.700 19.500 28.600 16.300 27Z" fill="#fdc40f"/>
<path d="M9.500 9.800C12.500 7.800 15.500 7.600 18.800 9.300L18.300 11.500C15 10 12 10.200 9 12Z M20.300 10C23.500 11.800 26.500 11.500 30 9.800L29.400 12C26 13.600 23 13.800 19.800 12.200Z" fill="#fff" opacity=".25"/></svg>
<svg class="a" style="left:72.500px;top:731.500px" width="33" height="33" viewBox="0 0 33 33">
<circle cx="16.500" cy="16.500" r="16" fill="#fcc31e"/>
<path d="M16.500 16.500L2.640 8.500A16 16 0 0 0 16.500 32.500L23.500 20.500Z" fill="#2da94f"/>
<path d="M2.640 8.500A16 16 0 0 1 30.360 8.500H16.500L9.570 20.500Z" fill="#e33b2e"/>
<path d="M16.500 32.500L23.430 20.500L16.500 16.500L9.570 20.500Z" fill="#2da94f"/>
<path d="M16.500 8.500H30.360A16 16 0 0 1 16.500 32.500L23.430 20.500Z" fill="#fcc31e"/>
<circle cx="16.500" cy="16.500" r="8" fill="#fff"/><circle cx="16.500" cy="16.500" r="6.300" fill="#4285f4"/></svg>
<svg class="a" style="left:137px;top:736px" width="27" height="26" viewBox="0 0 27 26">
<rect x="3" y="0.500" width="23" height="24" fill="#4e8fc4"/><rect x="1.500" y="1" width="23" height="24" fill="#6fa8d6"/><rect x="0" y="1.500" width="22" height="24" fill="#8fc0e6" stroke="#3f78ad" stroke-width=".6"/>
<circle cx="11.500" cy="13" r="8.500" fill="#f47a1f"/><circle cx="11.500" cy="13" r="8.500" fill="none" stroke="#ffb066" stroke-width=".8"/><path d="M8.500 8L16.500 13L8.500 18Z" fill="#fff"/></svg>
<svg class="a" style="left:196px;top:731px" width="32" height="32" viewBox="0 0 32 32">
<path d="M7 2L30 5V21L7 19Z" fill="#2d5fc0" stroke="#b8c4d6" stroke-width="1.400"/><path d="M7 2L30 5V12C20 8 12 9 7 11Z" fill="#5b8ee6"/>
<path d="M15 20H22L23 26H14Z" fill="#b5b9bf"/><ellipse cx="18.500" cy="28" rx="8" ry="3" fill="#d4d7db" stroke="#8e939a" stroke-width=".6"/>
<rect x="0.500" y="6.500" width="21" height="9.500" rx="1.200" fill="#3f8fe8" stroke="#d9e6f7" stroke-width=".8"/>
<path d="M2.500 9H19.500M2.500 11.200H19.500M4.500 13.600H17" stroke="#e8f1fb" stroke-width="1.200" stroke-dasharray="1.400 .8"/></svg>
<svg class="a" style="left:258px;top:732px" width="34" height="32" viewBox="0 0 34 32">
<defs><linearGradient id="ieg" x1="0" y1="0" x2="0" y2="1"><stop offset="0" stop-color="#5cc4f4"/><stop offset="1" stop-color="#1565b5"/></linearGradient></defs>
<path d="M17 5.500C24.500 5.500 29.500 11 29 18.500H12.500C12.800 22 15 23.800 18 23.800C20.500 23.800 22 22.800 23 21H28.500C27 26 23 29 17.500 29C10.500 29 5.500 24 5.500 17C5.500 10.500 10.500 5.500 17 5.500ZM12.600 14.500H22.400C22 11.800 20 10.300 17.500 10.300C15 10.300 13 11.800 12.600 14.500Z" fill="url(#ieg)"/>
<path d="M2 30C-2 24 8 10 22 3.500C28 0.800 32.500 1.500 32.500 5C32.500 6.500 32 8 31 9.500C31.500 6 29 4.500 24 6.500C14 10.500 3 23 4.500 28C5 30 8 29.500 11 28C7 31.500 3.500 32 2 30Z" fill="#f2b21d"/></svg>
<svg class="a" style="left:321px;top:732px" width="32" height="32" viewBox="0 0 32 32">
<path d="M0.500 0.500C9 6 23 6 31.500 0.500C26 9 26 23 31.500 31.500C23 26 9 26 0.500 31.500C6 23 6 9 0.500 0.500Z" fill="#f4e31a" stroke="#e8392a" stroke-width="1.100"/>
<path d="M4.500 4.500C12 10.300 20 10.300 27.500 4.500C21.700 12 21.700 20 27.500 27.500C20 21.700 12 21.700 4.500 27.500C10.300 20 10.300 12 4.500 4.500Z" fill="#ee2a20"/>
<path d="M1 1L5.500 5.500M31 1L26.500 5.500M1 31L5.500 26.500M31 31L26.500 26.500" stroke="#ee2a20" stroke-width="2.200"/>
<path d="M1 1L8 8M31 1L24 8M1 31L8 24M31 31L24 24" stroke="#fff" stroke-width=".9" stroke-dasharray="1 .6"/>
<path d="M16 10V22M10 16H22" stroke="#fff" stroke-width="1.300" stroke-dasharray="1.200 .500"/><rect x="15" y="15" width="2" height="2" fill="#f4d01a"/></svg>
<svg class="a" style="left:383px;top:732px" width="32" height="32" viewBox="0 0 32 32">
<defs><linearGradient id="flm" x1="0" y1="0" x2="0" y2="1"><stop offset="0" stop-color="#2f3a9e"/><stop offset="1" stop-color="#a9a2f0"/></linearGradient>
<linearGradient id="flf" x1="0" y1="0" x2="0" y2="1"><stop offset="0" stop-color="#e8f4fb"/><stop offset="1" stop-color="#8cc4ee"/></linearGradient></defs>
<rect x="0" y="0" width="32" height="32" fill="#fff"/>
<rect x="1.300" y="1.300" width="29.400" height="29.400" fill="url(#flm)"/>
<rect x="4" y="1.300" width="4" height="29.400" fill="#22242c"/><rect x="24" y="1.300" width="4" height="29.400" fill="#22242c"/>
<path d="M6 3.500V30M26 3.500V30" stroke="#7a6ef0" stroke-width="1.900" stroke-dasharray="1.900 2.100"/>
<rect x="8" y="1.300" width="16" height="29.400" fill="#22242c"/>
<rect x="8" y="3.500" width="16" height="11.500" fill="url(#flf)"/><rect x="8" y="17" width="16" height="11.500" fill="#8ec5ef"/></svg>
<svg class="a" style="left:445px;top:735px" width="33" height="29" viewBox="0 0 33 29">
<path d="M2 3H13L15 5.500H31V24H2Z" fill="#e9c767" stroke="#c9a545" stroke-width=".8"/>
<rect x="3.500" y="2" width="3" height="2.400" fill="#3aa63a"/><rect x="12" y="3" width="3" height="2.400" fill="#d83a2e"/><rect x="20" y="4" width="3.500" height="2.400" fill="#3a8ee0"/>
<path d="M0.500 8H32.500L31 25H2Z" fill="#f6dd8a" stroke="#d3b24f" stroke-width=".8"/>
<path d="M7 28.500V18C7 16.500 8 15.500 9.500 15.500H23.500C25 15.500 26 16.500 26 18V28.500H20.500V21.500H12.500V28.500Z" fill="#7ec3ea" stroke="#3f8fc4" stroke-width=".9"/>
<path d="M7.500 18C7.500 16.800 8.300 16 9.500 16H23.500C24.700 16 25.500 16.800 25.500 18V19.500H7.500Z" fill="#c9e8f8"/></svg>
<svg class="a" style="left:507px;top:730px" width="32" height="34" viewBox="0 0 32 34">
<defs><linearGradient id="ffg" x1=".2" y1="0" x2=".6" y2="1"><stop offset="0" stop-color="#ffd43a"/><stop offset=".45" stop-color="#ff8a16"/><stop offset="1" stop-color="#f0345e"/></linearGradient>
<radialGradient id="ffp" cx="50%" cy="40%" r="60%"><stop offset="0" stop-color="#9059ff"/><stop offset="1" stop-color="#5b2fc4"/></radialGradient></defs>
<path d="M20.500 0.500C23 4 22.500 7 25.500 9.500C29.500 13 31.500 16 31 21C30.300 28 24 33.500 16 33.500C7.500 33.500 1 27 1 19.500C1 14.500 3 11 5.500 9C5.500 11 6 12 7 13C8.500 9.500 11.500 8.500 13.500 6.500C15.500 4.500 17 3.500 20.500 0.500Z" fill="url(#ffg)"/>
<circle cx="16.500" cy="19" r="8.200" fill="url(#ffp)"/>
<path d="M7.500 13.500C10 12 13 12.500 14.500 14.500C12.500 14.500 11.500 15.500 11.500 17C11.500 19 13.500 20.500 16 20.500C19 20.500 21.500 18.500 21.500 16C25 19 23.500 27.500 16 27.500C9.500 27.500 5.500 21 7.500 13.500Z" fill="#ffb329"/></svg>
<svg class="a" style="left:571px;top:731px" width="29" height="31" viewBox="0 0 29 31">
<path d="M11 1L21 0.500L14 19L3.500 17Z" fill="#7e8fe0" stroke="#4c5cb8" stroke-width=".8"/><path d="M12 2.500L19.500 2L13.500 17L5 15.500Z" fill="#aab8f2"/>
<path d="M1 19.500L14 16L28 21.500V25L13 30L1 23.500Z" fill="#d9ddf0" stroke="#6b76b8" stroke-width=".8"/>
<path d="M4 20L14 17.500L25 21.500L13.500 25Z" fill="#c7d96a"/><path d="M12 18.500L21 17.500L23.500 19.500L15 21Z" fill="#e8c53a" stroke="#a08a2a" stroke-width=".5"/>
<path d="M1 23.500L13 30L28 25" fill="none" stroke="#3f4fa8" stroke-width="1.200"/></svg>
<span class="t" style="left:1125.25px;top:737px;line-height:18px;font-size:12.5px;color:#e8e8e8;transform:scaleX(0.9078);">PT</span>
<svg class="a" style="left:1155px;top:746px" width="8" height="5" viewBox="0 0 8 5"><path d="M0 5H8L4 0Z" fill="#e8e8e8"/></svg>
<svg class="a" style="left:1176px;top:741px" width="17" height="17" viewBox="0 0 17 17"><path d="M1 0.500V16" stroke="#f0f0f0" stroke-width="1.400"/><path d="M2.500 1.500C5 0 7 3 10.500 1.500V8C7 9.500 5 6.500 2.500 8Z" fill="#f0f0f0"/><circle cx="11.500" cy="11.500" r="4.800" fill="#d9281e" stroke="#fff" stroke-width=".6"/><path d="M9.500 9.500L13.500 13.500M13.500 9.500L9.500 13.500" stroke="#fff" stroke-width="1.500"/></svg>
<svg class="a" style="left:1201px;top:744px" width="15" height="11" viewBox="0 0 15 11"><path d="M0 9H2V11H0Z M3 7H5V11H3Z M6 5H8V11H6Z M9 3H11V11H9Z M12 0.500H14V11H12Z" fill="#f2f2f2"/></svg>
<svg class="a" style="left:1224px;top:741px" width="16" height="16" viewBox="0 0 16 16"><path d="M0.500 5.500H3.500L8 1V15L3.500 10.500H0.500Z" fill="#f0f0f0"/><path d="M10 5.500C11.200 7 11.200 9 10 10.500M12 3.500C14.200 6.500 14.200 9.500 12 12.500" fill="none" stroke="#f0f0f0" stroke-width="1.100"/></svg>
<svg class="a" style="left:1248px;top:741px" width="16" height="17" viewBox="0 0 16 17"><rect x="1" y="2.500" width="8.500" height="13" rx="1" fill="none" stroke="#f0f0f0" stroke-width="1.400"/><path d="M4 2.500V0.800H6.500V2.500" stroke="#f0f0f0" fill="none"/><path d="M8 3V0.500M12.500 3V0.500" stroke="#f0f0f0" stroke-width="1.400"/><path d="M6.500 3H14V7C14 9 12.500 10 10.250 10C8 10 6.500 9 6.500 7Z" fill="#f0f0f0"/><path d="M10.250 10V13.500H7" stroke="#f0f0f0" stroke-width="1.400" fill="none"/></svg>
<span class="t" style="left:1297.25px;top:733.3px;line-height:16px;font-size:12px;color:#f0f0f0;transform:scaleX(0.9158);">01:39</span>
<span class="t" style="left:1281.75px;top:749.3px;line-height:16px;font-size:12px;color:#f0f0f0;transform:scaleX(0.9740);">14/01/2024</span>
<div class="a" style="left:1352px;top:729px;width:14px;height:39px;background:linear-gradient(125deg,#8a8e92,#3a3e42 35%,#101316 70%);border-left:1px solid #70757b"></div>
</body></html>
